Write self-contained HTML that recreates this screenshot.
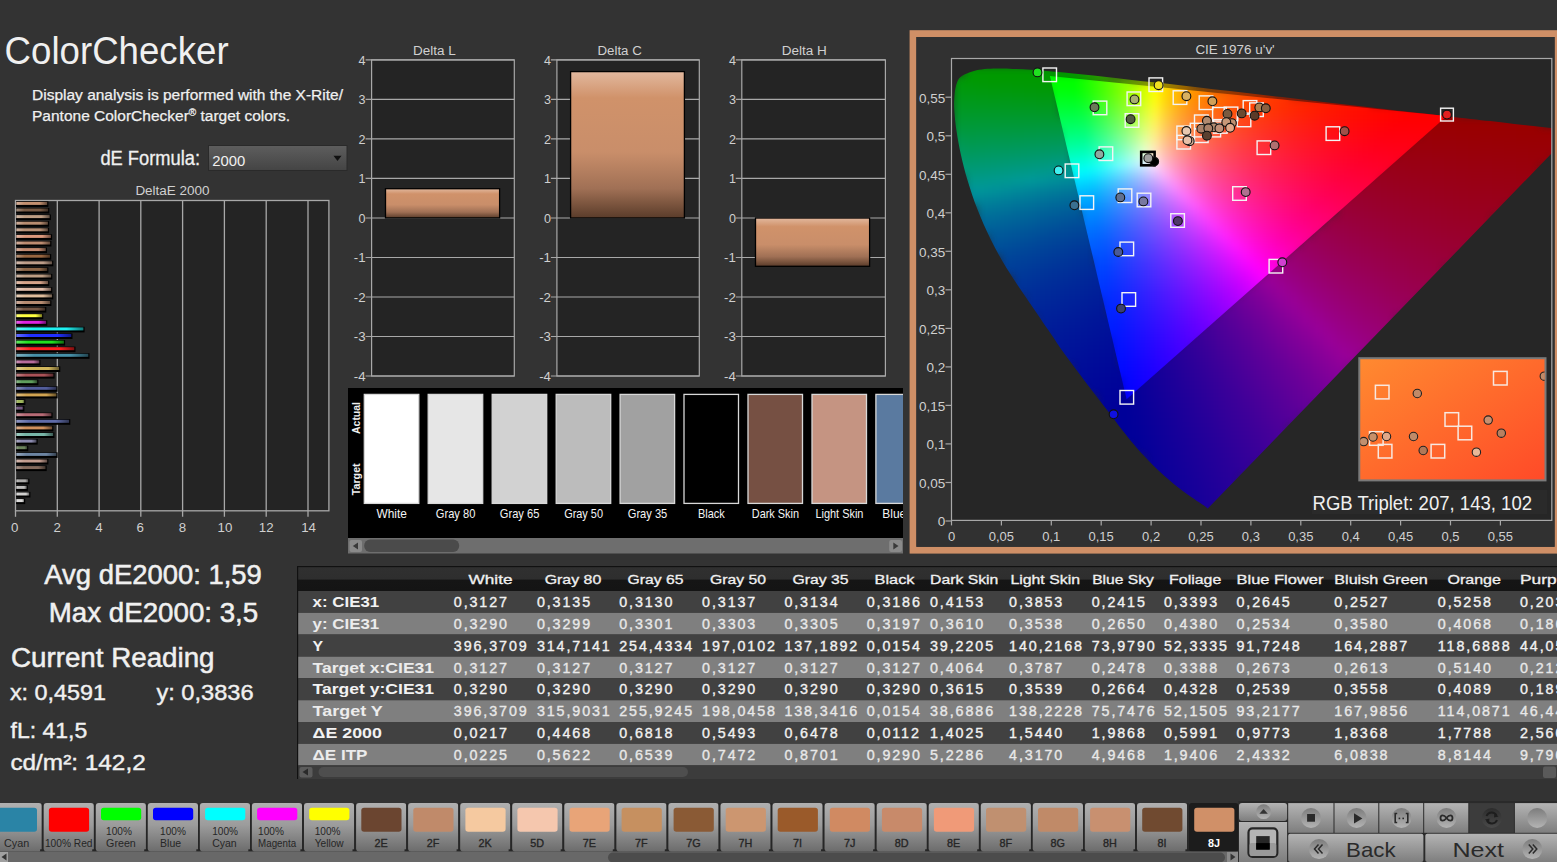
<!DOCTYPE html>
<html><head><meta charset="utf-8"><title>ColorChecker</title>
<style>
html,body{margin:0;padding:0;background:#333333;overflow:hidden;width:1557px;height:862px}
svg{display:block}
text{font-family:"Liberation Sans",sans-serif}
.cl1 rect{width:13px;height:11px}
.cl2 rect{width:11px;height:9px}
</style></head><body>
<svg width="1557" height="862" viewBox="0 0 1557 862">
<defs>
<linearGradient id="gDrop" x1="0" y1="0" x2="0" y2="1"><stop offset="0" stop-color="#5e5e5e"/><stop offset="1" stop-color="#444"/></linearGradient>
<linearGradient id="gBarV" x1="0" y1="0" x2="0" y2="1"><stop offset="0" stop-color="#e2b89e"/><stop offset="0.18" stop-color="#d0926a"/><stop offset="0.55" stop-color="#c98e6a"/><stop offset="0.8" stop-color="#a07055"/><stop offset="1" stop-color="#5a3c2a"/></linearGradient>
<linearGradient id="bg0"><stop offset="0" stop-color="#d5b19b"/><stop offset="0.25" stop-color="#c39070"/><stop offset="0.75" stop-color="#c39070"/><stop offset="1" stop-color="#624838"/></linearGradient><linearGradient id="bg1"><stop offset="0" stop-color="#a08c7c"/><stop offset="0.25" stop-color="#785a44"/><stop offset="0.75" stop-color="#785a44"/><stop offset="1" stop-color="#3c2d22"/></linearGradient><linearGradient id="bg2"><stop offset="0" stop-color="#d1baa8"/><stop offset="0.25" stop-color="#bd9d83"/><stop offset="0.75" stop-color="#bd9d83"/><stop offset="1" stop-color="#5e4e42"/></linearGradient><linearGradient id="bg3"><stop offset="0" stop-color="#cdae9b"/><stop offset="0.25" stop-color="#b78c70"/><stop offset="0.75" stop-color="#b78c70"/><stop offset="1" stop-color="#5c4638"/></linearGradient><linearGradient id="bg4"><stop offset="0" stop-color="#cdb19f"/><stop offset="0.25" stop-color="#b79076"/><stop offset="0.75" stop-color="#b79076"/><stop offset="1" stop-color="#5c483b"/></linearGradient><linearGradient id="bg5"><stop offset="0" stop-color="#e6b7a3"/><stop offset="0.25" stop-color="#dc987c"/><stop offset="0.75" stop-color="#dc987c"/><stop offset="1" stop-color="#6e4c3e"/></linearGradient><linearGradient id="bg6"><stop offset="0" stop-color="#d1ae9c"/><stop offset="0.25" stop-color="#bd8c71"/><stop offset="0.75" stop-color="#bd8c71"/><stop offset="1" stop-color="#5e4638"/></linearGradient><linearGradient id="bg7"><stop offset="0" stop-color="#d5ad9b"/><stop offset="0.25" stop-color="#c38a70"/><stop offset="0.75" stop-color="#c38a70"/><stop offset="1" stop-color="#624538"/></linearGradient><linearGradient id="bg8"><stop offset="0" stop-color="#b89479"/><stop offset="0.25" stop-color="#996640"/><stop offset="0.75" stop-color="#996640"/><stop offset="1" stop-color="#4c3320"/></linearGradient><linearGradient id="bg9"><stop offset="0" stop-color="#d1baac"/><stop offset="0.25" stop-color="#bd9d89"/><stop offset="0.75" stop-color="#bd9d89"/><stop offset="1" stop-color="#5e4e44"/></linearGradient><linearGradient id="bg10"><stop offset="0" stop-color="#af947f"/><stop offset="0.25" stop-color="#8d6648"/><stop offset="0.75" stop-color="#8d6648"/><stop offset="1" stop-color="#463324"/></linearGradient><linearGradient id="bg11"><stop offset="0" stop-color="#d1baa8"/><stop offset="0.25" stop-color="#bd9d83"/><stop offset="0.75" stop-color="#bd9d83"/><stop offset="1" stop-color="#5e4e42"/></linearGradient><linearGradient id="bg12"><stop offset="0" stop-color="#e2bfac"/><stop offset="0.25" stop-color="#d6a389"/><stop offset="0.75" stop-color="#d6a389"/><stop offset="1" stop-color="#6b5244"/></linearGradient><linearGradient id="bg13"><stop offset="0" stop-color="#e9cfc1"/><stop offset="0.25" stop-color="#e0baa6"/><stop offset="0.75" stop-color="#e0baa6"/><stop offset="1" stop-color="#705d53"/></linearGradient><linearGradient id="bg14"><stop offset="0" stop-color="#e9d1ba"/><stop offset="0.25" stop-color="#e0bd9c"/><stop offset="0.75" stop-color="#e0bd9c"/><stop offset="1" stop-color="#705e4e"/></linearGradient><linearGradient id="bg15"><stop offset="0" stop-color="#cdae9c"/><stop offset="0.25" stop-color="#b78c71"/><stop offset="0.75" stop-color="#b78c71"/><stop offset="1" stop-color="#5c4638"/></linearGradient><linearGradient id="bg16"><stop offset="0" stop-color="#9e897c"/><stop offset="0.25" stop-color="#745644"/><stop offset="0.75" stop-color="#745644"/><stop offset="1" stop-color="#3a2b22"/></linearGradient><linearGradient id="bg17"><stop offset="0" stop-color="#ffff79"/><stop offset="0.25" stop-color="#ffff40"/><stop offset="0.75" stop-color="#ffff40"/><stop offset="1" stop-color="#808020"/></linearGradient><linearGradient id="bg18"><stop offset="0" stop-color="#e963e9"/><stop offset="0.25" stop-color="#e020e0"/><stop offset="0.75" stop-color="#e020e0"/><stop offset="1" stop-color="#701070"/></linearGradient><linearGradient id="bg19"><stop offset="0" stop-color="#63f4f4"/><stop offset="0.25" stop-color="#20f0f0"/><stop offset="0.75" stop-color="#20f0f0"/><stop offset="1" stop-color="#107878"/></linearGradient><linearGradient id="bg20"><stop offset="0" stop-color="#636eff"/><stop offset="0.25" stop-color="#2030ff"/><stop offset="0.75" stop-color="#2030ff"/><stop offset="1" stop-color="#101880"/></linearGradient><linearGradient id="bg21"><stop offset="0" stop-color="#63e963"/><stop offset="0.25" stop-color="#20e020"/><stop offset="0.75" stop-color="#20e020"/><stop offset="1" stop-color="#107010"/></linearGradient><linearGradient id="bg22"><stop offset="0" stop-color="#ff6363"/><stop offset="0.25" stop-color="#ff2020"/><stop offset="0.75" stop-color="#ff2020"/><stop offset="1" stop-color="#801010"/></linearGradient><linearGradient id="bg23"><stop offset="0" stop-color="#7eb1c2"/><stop offset="0.25" stop-color="#4690a8"/><stop offset="0.75" stop-color="#4690a8"/><stop offset="1" stop-color="#234854"/></linearGradient><linearGradient id="bg24"><stop offset="0" stop-color="#cd97ba"/><stop offset="0.25" stop-color="#b76b9c"/><stop offset="0.75" stop-color="#b76b9c"/><stop offset="1" stop-color="#5c364e"/></linearGradient><linearGradient id="bg25"><stop offset="0" stop-color="#decc8e"/><stop offset="0.25" stop-color="#d0b65d"/><stop offset="0.75" stop-color="#d0b65d"/><stop offset="1" stop-color="#685b2e"/></linearGradient><linearGradient id="bg26"><stop offset="0" stop-color="#c48689"/><stop offset="0.25" stop-color="#aa5257"/><stop offset="0.75" stop-color="#aa5257"/><stop offset="1" stop-color="#55292c"/></linearGradient><linearGradient id="bg27"><stop offset="0" stop-color="#8fba8e"/><stop offset="0.25" stop-color="#5f9d5d"/><stop offset="0.75" stop-color="#5f9d5d"/><stop offset="1" stop-color="#304e2e"/></linearGradient><linearGradient id="bg28"><stop offset="0" stop-color="#878eba"/><stop offset="0.25" stop-color="#535e9c"/><stop offset="0.75" stop-color="#535e9c"/><stop offset="1" stop-color="#2a2f4e"/></linearGradient><linearGradient id="bg29"><stop offset="0" stop-color="#debf85"/><stop offset="0.25" stop-color="#d0a351"/><stop offset="0.75" stop-color="#d0a351"/><stop offset="1" stop-color="#685228"/></linearGradient><linearGradient id="bg30"><stop offset="0" stop-color="#bbcc8e"/><stop offset="0.25" stop-color="#9eb65d"/><stop offset="0.75" stop-color="#9eb65d"/><stop offset="1" stop-color="#4f5b2e"/></linearGradient><linearGradient id="bg31"><stop offset="0" stop-color="#9e8ca8"/><stop offset="0.25" stop-color="#745a83"/><stop offset="0.75" stop-color="#745a83"/><stop offset="1" stop-color="#3a2d42"/></linearGradient><linearGradient id="bg32"><stop offset="0" stop-color="#cd979f"/><stop offset="0.25" stop-color="#b76b76"/><stop offset="0.75" stop-color="#b76b76"/><stop offset="1" stop-color="#5c363b"/></linearGradient><linearGradient id="bg33"><stop offset="0" stop-color="#8f97c2"/><stop offset="0.25" stop-color="#5f6ba8"/><stop offset="0.75" stop-color="#5f6ba8"/><stop offset="1" stop-color="#303654"/></linearGradient><linearGradient id="bg34"><stop offset="0" stop-color="#deb18e"/><stop offset="0.25" stop-color="#d0905d"/><stop offset="0.75" stop-color="#d0905d"/><stop offset="1" stop-color="#68482e"/></linearGradient><linearGradient id="bg35"><stop offset="0" stop-color="#a0ccc2"/><stop offset="0.25" stop-color="#78b6a8"/><stop offset="0.75" stop-color="#78b6a8"/><stop offset="1" stop-color="#3c5b54"/></linearGradient><linearGradient id="bg36"><stop offset="0" stop-color="#aeadc6"/><stop offset="0.25" stop-color="#8b8aae"/><stop offset="0.75" stop-color="#8b8aae"/><stop offset="1" stop-color="#464557"/></linearGradient><linearGradient id="bg37"><stop offset="0" stop-color="#98a98e"/><stop offset="0.25" stop-color="#6c845d"/><stop offset="0.75" stop-color="#6c845d"/><stop offset="1" stop-color="#36422e"/></linearGradient><linearGradient id="bg38"><stop offset="0" stop-color="#98a9be"/><stop offset="0.25" stop-color="#6c84a2"/><stop offset="0.75" stop-color="#6c84a2"/><stop offset="1" stop-color="#364251"/></linearGradient><linearGradient id="bg39"><stop offset="0" stop-color="#d5bab1"/><stop offset="0.25" stop-color="#c39d8f"/><stop offset="0.75" stop-color="#c39d8f"/><stop offset="1" stop-color="#624e48"/></linearGradient><linearGradient id="bg40"><stop offset="0" stop-color="#aa978e"/><stop offset="0.25" stop-color="#856b5d"/><stop offset="0.75" stop-color="#856b5d"/><stop offset="1" stop-color="#42362e"/></linearGradient><linearGradient id="bg42"><stop offset="0" stop-color="#c4c3c2"/><stop offset="0.25" stop-color="#aaa9a8"/><stop offset="0.75" stop-color="#aaa9a8"/><stop offset="1" stop-color="#555454"/></linearGradient><linearGradient id="bg43"><stop offset="0" stop-color="#d1d0cf"/><stop offset="0.25" stop-color="#bdbcbb"/><stop offset="0.75" stop-color="#bdbcbb"/><stop offset="1" stop-color="#5e5e5e"/></linearGradient><linearGradient id="bg44"><stop offset="0" stop-color="#dedddd"/><stop offset="0.25" stop-color="#d0cfce"/><stop offset="0.75" stop-color="#d0cfce"/><stop offset="1" stop-color="#686867"/></linearGradient><linearGradient id="bg45"><stop offset="0" stop-color="#e6e6e5"/><stop offset="0.25" stop-color="#dcdbda"/><stop offset="0.75" stop-color="#dcdbda"/><stop offset="1" stop-color="#6e6e6d"/></linearGradient>
</defs>
<rect width="1557" height="862" fill="#333333"/>
<text x="4.6" y="63.9" font-size="39.0" fill="#f0f0f0" textLength="224.0" lengthAdjust="spacingAndGlyphs">ColorChecker</text><text x="32.0" y="100.1" font-size="15.5" fill="#f0f0f0" textLength="311.0" lengthAdjust="spacingAndGlyphs" stroke="#f0f0f0" stroke-width="0.25">Display analysis is performed with the X-Rite/</text><text x="32" y="120.9" font-size="15.5" fill="#f0f0f0" stroke="#f0f0f0" stroke-width="0.25">Pantone ColorChecker<tspan font-size="10" dy="-5">®</tspan><tspan dy="5"> target colors.</tspan></text><text x="100.4" y="165.3" font-size="20.5" fill="#f0f0f0" textLength="99.7" lengthAdjust="spacingAndGlyphs" stroke="#f0f0f0" stroke-width="0.3">dE Formula:</text><rect x="208.5" y="145.5" width="138.5" height="25" fill="url(#gDrop)" stroke="#2a2a2a" stroke-width="1"/><text x="212.2" y="166.2" font-size="15.5" fill="#f0f0f0" textLength="33.0" lengthAdjust="spacingAndGlyphs">2000</text><path d="M333.5,155.8 L341.5,155.8 L337.5,161 Z" fill="#111"/><text x="135.4" y="194.8" font-size="12.3" fill="#d0d0d0" textLength="74.2" lengthAdjust="spacingAndGlyphs">DeltaE 2000</text><rect x="15.5" y="200.5" width="313.4" height="310.3" fill="#242424"/><line x1="57.3" y1="200.5" x2="57.3" y2="516.8" stroke="#a8a8a8" stroke-width="1.3"/><line x1="99.1" y1="200.5" x2="99.1" y2="516.8" stroke="#a8a8a8" stroke-width="1.3"/><line x1="140.8" y1="200.5" x2="140.8" y2="516.8" stroke="#a8a8a8" stroke-width="1.3"/><line x1="182.6" y1="200.5" x2="182.6" y2="516.8" stroke="#a8a8a8" stroke-width="1.3"/><line x1="224.4" y1="200.5" x2="224.4" y2="516.8" stroke="#a8a8a8" stroke-width="1.3"/><line x1="266.2" y1="200.5" x2="266.2" y2="516.8" stroke="#a8a8a8" stroke-width="1.3"/><line x1="308.0" y1="200.5" x2="308.0" y2="516.8" stroke="#a8a8a8" stroke-width="1.3"/><rect x="15.5" y="200.5" width="313.4" height="310.3" fill="none" stroke="#a8a8a8" stroke-width="1.3"/><line x1="15.5" y1="510.8" x2="15.5" y2="516.8" stroke="#a8a8a8" stroke-width="1.3"/><text x="14.7" y="532.2" font-size="13.0" fill="#d0d0d0" textLength="7.4" lengthAdjust="spacingAndGlyphs" text-anchor="middle">0</text><text x="57.1" y="532.2" font-size="13.0" fill="#d0d0d0" textLength="7.4" lengthAdjust="spacingAndGlyphs" text-anchor="middle">2</text><text x="99.0" y="532.2" font-size="13.0" fill="#d0d0d0" textLength="7.4" lengthAdjust="spacingAndGlyphs" text-anchor="middle">4</text><text x="140.3" y="532.2" font-size="13.0" fill="#d0d0d0" textLength="7.4" lengthAdjust="spacingAndGlyphs" text-anchor="middle">6</text><text x="182.5" y="532.2" font-size="13.0" fill="#d0d0d0" textLength="7.4" lengthAdjust="spacingAndGlyphs" text-anchor="middle">8</text><text x="225.0" y="532.2" font-size="13.0" fill="#d0d0d0" textLength="14.8" lengthAdjust="spacingAndGlyphs" text-anchor="middle">10</text><text x="266.2" y="532.2" font-size="13.0" fill="#d0d0d0" textLength="14.8" lengthAdjust="spacingAndGlyphs" text-anchor="middle">12</text><text x="308.6" y="532.2" font-size="13.0" fill="#d0d0d0" textLength="14.8" lengthAdjust="spacingAndGlyphs" text-anchor="middle">14</text><rect x="16.1" y="201.3" width="32.3" height="5.6" fill="#000"/><rect x="16.3" y="201.9" width="30.9" height="3.0" fill="url(#bg0)"/><rect x="16.1" y="207.9" width="33.2" height="5.6" fill="#000"/><rect x="16.3" y="208.5" width="31.8" height="3.0" fill="url(#bg1)"/><rect x="16.1" y="214.5" width="34.8" height="5.6" fill="#000"/><rect x="16.3" y="215.1" width="33.4" height="3.0" fill="url(#bg2)"/><rect x="16.1" y="221.1" width="33.0" height="5.6" fill="#000"/><rect x="16.3" y="221.7" width="31.6" height="3.0" fill="url(#bg3)"/><rect x="16.1" y="227.7" width="33.0" height="5.6" fill="#000"/><rect x="16.3" y="228.3" width="31.6" height="3.0" fill="url(#bg4)"/><rect x="16.1" y="234.3" width="36.0" height="5.6" fill="#000"/><rect x="16.3" y="234.9" width="34.6" height="3.0" fill="url(#bg5)"/><rect x="16.1" y="240.9" width="35.3" height="5.6" fill="#000"/><rect x="16.3" y="241.5" width="33.9" height="3.0" fill="url(#bg6)"/><rect x="16.1" y="247.5" width="30.9" height="5.6" fill="#000"/><rect x="16.3" y="248.1" width="29.5" height="3.0" fill="url(#bg7)"/><rect x="16.1" y="254.1" width="35.1" height="5.6" fill="#000"/><rect x="16.3" y="254.7" width="33.7" height="3.0" fill="url(#bg8)"/><rect x="16.1" y="260.7" width="37.2" height="5.6" fill="#000"/><rect x="16.3" y="261.3" width="35.8" height="3.0" fill="url(#bg9)"/><rect x="16.1" y="267.3" width="32.3" height="5.6" fill="#000"/><rect x="16.3" y="267.9" width="30.9" height="3.0" fill="url(#bg10)"/><rect x="16.1" y="273.9" width="36.2" height="5.6" fill="#000"/><rect x="16.3" y="274.5" width="34.8" height="3.0" fill="url(#bg11)"/><rect x="16.1" y="280.5" width="33.2" height="5.6" fill="#000"/><rect x="16.3" y="281.1" width="31.8" height="3.0" fill="url(#bg12)"/><rect x="16.1" y="287.2" width="36.2" height="5.6" fill="#000"/><rect x="16.3" y="287.8" width="34.8" height="3.0" fill="url(#bg13)"/><rect x="16.1" y="293.8" width="37.2" height="5.6" fill="#000"/><rect x="16.3" y="294.4" width="35.8" height="3.0" fill="url(#bg14)"/><rect x="16.1" y="300.4" width="35.3" height="5.6" fill="#000"/><rect x="16.3" y="301.0" width="33.9" height="3.0" fill="url(#bg15)"/><rect x="16.1" y="307.0" width="30.2" height="5.6" fill="#000"/><rect x="16.3" y="307.6" width="28.8" height="3.0" fill="url(#bg16)"/><rect x="16.1" y="313.6" width="27.2" height="5.6" fill="#000"/><rect x="16.3" y="314.2" width="25.8" height="3.0" fill="url(#bg17)"/><rect x="16.1" y="320.2" width="31.2" height="5.6" fill="#000"/><rect x="16.3" y="320.8" width="29.8" height="3.0" fill="url(#bg18)"/><rect x="16.1" y="326.8" width="68.5" height="5.6" fill="#000"/><rect x="16.3" y="327.4" width="67.1" height="3.0" fill="url(#bg19)"/><rect x="16.1" y="333.4" width="56.4" height="5.6" fill="#000"/><rect x="16.3" y="334.0" width="55.0" height="3.0" fill="url(#bg20)"/><rect x="16.1" y="340.0" width="49.0" height="5.6" fill="#000"/><rect x="16.3" y="340.6" width="47.6" height="3.0" fill="url(#bg21)"/><rect x="16.1" y="346.6" width="59.4" height="5.6" fill="#000"/><rect x="16.3" y="347.2" width="58.0" height="3.0" fill="url(#bg22)"/><rect x="16.1" y="353.2" width="73.4" height="5.6" fill="#000"/><rect x="16.3" y="353.8" width="72.0" height="3.0" fill="url(#bg23)"/><rect x="16.1" y="359.8" width="24.4" height="5.6" fill="#000"/><rect x="16.3" y="360.4" width="23.0" height="3.0" fill="url(#bg24)"/><rect x="16.1" y="366.4" width="44.2" height="5.6" fill="#000"/><rect x="16.3" y="367.0" width="42.8" height="3.0" fill="url(#bg25)"/><rect x="16.1" y="373.0" width="38.5" height="5.6" fill="#000"/><rect x="16.3" y="373.6" width="37.1" height="3.0" fill="url(#bg26)"/><rect x="16.1" y="379.6" width="22.3" height="5.6" fill="#000"/><rect x="16.3" y="380.2" width="20.9" height="3.0" fill="url(#bg27)"/><rect x="16.1" y="386.2" width="41.5" height="5.6" fill="#000"/><rect x="16.3" y="386.8" width="40.1" height="3.0" fill="url(#bg28)"/><rect x="16.1" y="392.8" width="41.5" height="5.6" fill="#000"/><rect x="16.3" y="393.4" width="40.1" height="3.0" fill="url(#bg29)"/><rect x="16.1" y="399.4" width="9.3" height="5.6" fill="#000"/><rect x="16.3" y="400.0" width="7.9" height="3.0" fill="url(#bg30)"/><rect x="16.1" y="406.0" width="8.3" height="5.6" fill="#000"/><rect x="16.3" y="406.6" width="6.9" height="3.0" fill="url(#bg31)"/><rect x="16.1" y="412.6" width="36.5" height="5.6" fill="#000"/><rect x="16.3" y="413.2" width="35.1" height="3.0" fill="url(#bg32)"/><rect x="16.1" y="419.2" width="54.2" height="5.6" fill="#000"/><rect x="16.3" y="419.8" width="52.8" height="3.0" fill="url(#bg33)"/><rect x="16.1" y="425.8" width="37.3" height="5.6" fill="#000"/><rect x="16.3" y="426.4" width="35.9" height="3.0" fill="url(#bg34)"/><rect x="16.1" y="432.4" width="38.3" height="5.6" fill="#000"/><rect x="16.3" y="433.0" width="36.9" height="3.0" fill="url(#bg35)"/><rect x="16.1" y="439.0" width="21.6" height="5.6" fill="#000"/><rect x="16.3" y="439.6" width="20.2" height="3.0" fill="url(#bg36)"/><rect x="16.1" y="445.6" width="12.2" height="5.6" fill="#000"/><rect x="16.3" y="446.2" width="10.8" height="3.0" fill="url(#bg37)"/><rect x="16.1" y="452.3" width="41.5" height="5.6" fill="#000"/><rect x="16.3" y="452.9" width="40.1" height="3.0" fill="url(#bg38)"/><rect x="16.1" y="458.9" width="32.3" height="5.6" fill="#000"/><rect x="16.3" y="459.5" width="30.9" height="3.0" fill="url(#bg39)"/><rect x="16.1" y="465.5" width="30.6" height="5.6" fill="#000"/><rect x="16.3" y="466.1" width="29.2" height="3.0" fill="url(#bg40)"/><rect x="16.1" y="478.7" width="13.3" height="5.6" fill="#000"/><rect x="16.3" y="479.3" width="11.9" height="3.0" fill="url(#bg42)"/><rect x="16.1" y="485.3" width="11.8" height="5.6" fill="#000"/><rect x="16.3" y="485.9" width="10.4" height="3.0" fill="url(#bg43)"/><rect x="16.1" y="491.9" width="14.3" height="5.6" fill="#000"/><rect x="16.3" y="492.5" width="12.9" height="3.0" fill="url(#bg44)"/><rect x="16.1" y="498.5" width="9.1" height="5.6" fill="#000"/><rect x="16.3" y="499.1" width="7.7" height="3.0" fill="url(#bg45)"/><text x="413.1" y="55.0" font-size="12.3" fill="#d0d0d0" textLength="42.7" lengthAdjust="spacingAndGlyphs">Delta L</text><rect x="371.6" y="59.9" width="142.7" height="316.1" fill="#242424" stroke="#a8a8a8" stroke-width="1.2"/><line x1="365.6" y1="59.9" x2="514.3" y2="59.9" stroke="#a8a8a8" stroke-width="1.2"/><text x="365.6" y="64.8" font-size="12.4" fill="#d0d0d0" textLength="7.0" lengthAdjust="spacingAndGlyphs" text-anchor="end">4</text><line x1="365.6" y1="99.4" x2="514.3" y2="99.4" stroke="#a8a8a8" stroke-width="1.2"/><text x="365.6" y="104.3" font-size="12.4" fill="#d0d0d0" textLength="7.0" lengthAdjust="spacingAndGlyphs" text-anchor="end">3</text><line x1="365.6" y1="138.9" x2="514.3" y2="138.9" stroke="#a8a8a8" stroke-width="1.2"/><text x="365.6" y="143.8" font-size="12.4" fill="#d0d0d0" textLength="7.0" lengthAdjust="spacingAndGlyphs" text-anchor="end">2</text><line x1="365.6" y1="178.4" x2="514.3" y2="178.4" stroke="#a8a8a8" stroke-width="1.2"/><text x="365.6" y="183.3" font-size="12.4" fill="#d0d0d0" textLength="7.0" lengthAdjust="spacingAndGlyphs" text-anchor="end">1</text><line x1="365.6" y1="218.0" x2="514.3" y2="218.0" stroke="#a8a8a8" stroke-width="1.2"/><text x="365.6" y="222.9" font-size="12.4" fill="#d0d0d0" textLength="7.0" lengthAdjust="spacingAndGlyphs" text-anchor="end">0</text><line x1="365.6" y1="257.5" x2="514.3" y2="257.5" stroke="#a8a8a8" stroke-width="1.2"/><text x="365.6" y="262.4" font-size="12.4" fill="#d0d0d0" textLength="11.8" lengthAdjust="spacingAndGlyphs" text-anchor="end">-1</text><line x1="365.6" y1="297.0" x2="514.3" y2="297.0" stroke="#a8a8a8" stroke-width="1.2"/><text x="365.6" y="301.9" font-size="12.4" fill="#d0d0d0" textLength="11.8" lengthAdjust="spacingAndGlyphs" text-anchor="end">-2</text><line x1="365.6" y1="336.5" x2="514.3" y2="336.5" stroke="#a8a8a8" stroke-width="1.2"/><text x="365.6" y="341.4" font-size="12.4" fill="#d0d0d0" textLength="11.8" lengthAdjust="spacingAndGlyphs" text-anchor="end">-3</text><line x1="365.6" y1="376.0" x2="514.3" y2="376.0" stroke="#a8a8a8" stroke-width="1.2"/><text x="365.6" y="380.9" font-size="12.4" fill="#d0d0d0" textLength="11.8" lengthAdjust="spacingAndGlyphs" text-anchor="end">-4</text><rect x="385.5" y="188.7" width="114.1" height="29.2" fill="url(#gBarV)" stroke="#000" stroke-width="1.3"/><text x="597.5" y="55.0" font-size="12.3" fill="#d0d0d0" textLength="44.3" lengthAdjust="spacingAndGlyphs">Delta C</text><rect x="556.9" y="59.9" width="142.4" height="316.1" fill="#242424" stroke="#a8a8a8" stroke-width="1.2"/><line x1="550.9" y1="59.9" x2="699.3" y2="59.9" stroke="#a8a8a8" stroke-width="1.2"/><text x="551.0" y="64.8" font-size="12.4" fill="#d0d0d0" textLength="7.0" lengthAdjust="spacingAndGlyphs" text-anchor="end">4</text><line x1="550.9" y1="99.4" x2="699.3" y2="99.4" stroke="#a8a8a8" stroke-width="1.2"/><text x="551.0" y="104.3" font-size="12.4" fill="#d0d0d0" textLength="7.0" lengthAdjust="spacingAndGlyphs" text-anchor="end">3</text><line x1="550.9" y1="138.9" x2="699.3" y2="138.9" stroke="#a8a8a8" stroke-width="1.2"/><text x="551.0" y="143.8" font-size="12.4" fill="#d0d0d0" textLength="7.0" lengthAdjust="spacingAndGlyphs" text-anchor="end">2</text><line x1="550.9" y1="178.4" x2="699.3" y2="178.4" stroke="#a8a8a8" stroke-width="1.2"/><text x="551.0" y="183.3" font-size="12.4" fill="#d0d0d0" textLength="7.0" lengthAdjust="spacingAndGlyphs" text-anchor="end">1</text><line x1="550.9" y1="218.0" x2="699.3" y2="218.0" stroke="#a8a8a8" stroke-width="1.2"/><text x="551.0" y="222.9" font-size="12.4" fill="#d0d0d0" textLength="7.0" lengthAdjust="spacingAndGlyphs" text-anchor="end">0</text><line x1="550.9" y1="257.5" x2="699.3" y2="257.5" stroke="#a8a8a8" stroke-width="1.2"/><text x="551.0" y="262.4" font-size="12.4" fill="#d0d0d0" textLength="11.8" lengthAdjust="spacingAndGlyphs" text-anchor="end">-1</text><line x1="550.9" y1="297.0" x2="699.3" y2="297.0" stroke="#a8a8a8" stroke-width="1.2"/><text x="551.0" y="301.9" font-size="12.4" fill="#d0d0d0" textLength="11.8" lengthAdjust="spacingAndGlyphs" text-anchor="end">-2</text><line x1="550.9" y1="336.5" x2="699.3" y2="336.5" stroke="#a8a8a8" stroke-width="1.2"/><text x="551.0" y="341.4" font-size="12.4" fill="#d0d0d0" textLength="11.8" lengthAdjust="spacingAndGlyphs" text-anchor="end">-3</text><line x1="550.9" y1="376.0" x2="699.3" y2="376.0" stroke="#a8a8a8" stroke-width="1.2"/><text x="551.0" y="380.9" font-size="12.4" fill="#d0d0d0" textLength="11.8" lengthAdjust="spacingAndGlyphs" text-anchor="end">-4</text><rect x="570.6" y="71.6" width="113.8" height="146.4" fill="url(#gBarV)" stroke="#000" stroke-width="1.3"/><text x="781.7" y="55.0" font-size="12.3" fill="#d0d0d0" textLength="45.1" lengthAdjust="spacingAndGlyphs">Delta H</text><rect x="741.8" y="59.9" width="143.6" height="316.1" fill="#242424" stroke="#a8a8a8" stroke-width="1.2"/><line x1="735.8" y1="59.9" x2="885.4" y2="59.9" stroke="#a8a8a8" stroke-width="1.2"/><text x="735.9" y="64.8" font-size="12.4" fill="#d0d0d0" textLength="7.0" lengthAdjust="spacingAndGlyphs" text-anchor="end">4</text><line x1="735.8" y1="99.4" x2="885.4" y2="99.4" stroke="#a8a8a8" stroke-width="1.2"/><text x="735.9" y="104.3" font-size="12.4" fill="#d0d0d0" textLength="7.0" lengthAdjust="spacingAndGlyphs" text-anchor="end">3</text><line x1="735.8" y1="138.9" x2="885.4" y2="138.9" stroke="#a8a8a8" stroke-width="1.2"/><text x="735.9" y="143.8" font-size="12.4" fill="#d0d0d0" textLength="7.0" lengthAdjust="spacingAndGlyphs" text-anchor="end">2</text><line x1="735.8" y1="178.4" x2="885.4" y2="178.4" stroke="#a8a8a8" stroke-width="1.2"/><text x="735.9" y="183.3" font-size="12.4" fill="#d0d0d0" textLength="7.0" lengthAdjust="spacingAndGlyphs" text-anchor="end">1</text><line x1="735.8" y1="218.0" x2="885.4" y2="218.0" stroke="#a8a8a8" stroke-width="1.2"/><text x="735.9" y="222.9" font-size="12.4" fill="#d0d0d0" textLength="7.0" lengthAdjust="spacingAndGlyphs" text-anchor="end">0</text><line x1="735.8" y1="257.5" x2="885.4" y2="257.5" stroke="#a8a8a8" stroke-width="1.2"/><text x="735.9" y="262.4" font-size="12.4" fill="#d0d0d0" textLength="11.8" lengthAdjust="spacingAndGlyphs" text-anchor="end">-1</text><line x1="735.8" y1="297.0" x2="885.4" y2="297.0" stroke="#a8a8a8" stroke-width="1.2"/><text x="735.9" y="301.9" font-size="12.4" fill="#d0d0d0" textLength="11.8" lengthAdjust="spacingAndGlyphs" text-anchor="end">-2</text><line x1="735.8" y1="336.5" x2="885.4" y2="336.5" stroke="#a8a8a8" stroke-width="1.2"/><text x="735.9" y="341.4" font-size="12.4" fill="#d0d0d0" textLength="11.8" lengthAdjust="spacingAndGlyphs" text-anchor="end">-3</text><line x1="735.8" y1="376.0" x2="885.4" y2="376.0" stroke="#a8a8a8" stroke-width="1.2"/><text x="735.9" y="380.9" font-size="12.4" fill="#d0d0d0" textLength="11.8" lengthAdjust="spacingAndGlyphs" text-anchor="end">-4</text><rect x="755.5" y="218.0" width="114.1" height="48.3" fill="url(#gBarV)" stroke="#000" stroke-width="1.3"/><rect x="348" y="388" width="555" height="150" fill="#000"/><text x="0" y="0" font-size="11.5" font-weight="bold" fill="#f0f0f0" transform="translate(360.4,434) rotate(-90)" textLength="32" lengthAdjust="spacingAndGlyphs">Actual</text><text x="0" y="0" font-size="11.5" font-weight="bold" fill="#f0f0f0" transform="translate(360.4,495.3) rotate(-90)" textLength="32" lengthAdjust="spacingAndGlyphs">Target</text><svg x="348" y="388" width="555" height="150" overflow="hidden"><g transform="translate(-348,-388)"><rect x="364.3" y="394.4" width="54.5" height="109" fill="#ffffff" stroke="#d8d8d8" stroke-width="1.3"/><text x="391.7" y="518.4" font-size="13.0" fill="#f4f4f4" textLength="30.4" lengthAdjust="spacingAndGlyphs" text-anchor="middle">White</text><rect x="428.2" y="394.4" width="54.5" height="109" fill="#e6e6e6" stroke="#d8d8d8" stroke-width="1.3"/><text x="455.6" y="518.4" font-size="13.0" fill="#f4f4f4" textLength="39.5" lengthAdjust="spacingAndGlyphs" text-anchor="middle">Gray 80</text><rect x="492.2" y="394.4" width="54.5" height="109" fill="#d2d2d2" stroke="#d8d8d8" stroke-width="1.3"/><text x="519.6" y="518.4" font-size="13.0" fill="#f4f4f4" textLength="39.5" lengthAdjust="spacingAndGlyphs" text-anchor="middle">Gray 65</text><rect x="556.2" y="394.4" width="54.5" height="109" fill="#bcbcbc" stroke="#d8d8d8" stroke-width="1.3"/><text x="583.6" y="518.4" font-size="13.0" fill="#f4f4f4" textLength="38.9" lengthAdjust="spacingAndGlyphs" text-anchor="middle">Gray 50</text><rect x="620.1" y="394.4" width="54.5" height="109" fill="#a1a1a1" stroke="#d8d8d8" stroke-width="1.3"/><text x="647.5" y="518.4" font-size="13.0" fill="#f4f4f4" textLength="39.5" lengthAdjust="spacingAndGlyphs" text-anchor="middle">Gray 35</text><rect x="684.0" y="394.4" width="54.5" height="109" fill="#000000" stroke="#d8d8d8" stroke-width="1.3"/><text x="711.4" y="518.4" font-size="13.0" fill="#f4f4f4" textLength="26.7" lengthAdjust="spacingAndGlyphs" text-anchor="middle">Black</text><rect x="748.0" y="394.4" width="54.5" height="109" fill="#765043" stroke="#d8d8d8" stroke-width="1.3"/><text x="775.4" y="518.4" font-size="13.0" fill="#f4f4f4" textLength="47.2" lengthAdjust="spacingAndGlyphs" text-anchor="middle">Dark Skin</text><rect x="812.0" y="394.4" width="54.5" height="109" fill="#c59482" stroke="#d8d8d8" stroke-width="1.3"/><text x="839.4" y="518.4" font-size="13.0" fill="#f4f4f4" textLength="48.0" lengthAdjust="spacingAndGlyphs" text-anchor="middle">Light Skin</text><rect x="875.9" y="394.4" width="54.5" height="109" fill="#5a7aa0" stroke="#d8d8d8" stroke-width="1.3"/><text x="905.8" y="518.4" font-size="13.0" fill="#f4f4f4" textLength="47.0" lengthAdjust="spacingAndGlyphs" text-anchor="middle">Blue Sky</text></g></svg><rect x="348" y="538" width="555" height="15.5" fill="#6e6e6e"/><rect x="364.2" y="539.5" width="95" height="12.5" rx="6" fill="#4b4b4b"/><rect x="349.5" y="540" width="12.5" height="12" rx="2" fill="#8a8a8a"/><path d="M352.8,546 L358,542.5 L358,549.5 Z" fill="#3a3a3a"/><rect x="889.2" y="540" width="12.8" height="12" rx="2" fill="#8a8a8a"/><path d="M898.5,546 L893.3,542.5 L893.3,549.5 Z" fill="#3a3a3a"/><rect x="913" y="33.6" width="645" height="516.6" fill="none" stroke="#cf8f66" stroke-width="6.8"/><rect x="916.4" y="37" width="638.2" height="509.8" fill="#313131"/><text x="1195.4" y="53.9" font-size="12.3" fill="#d0d0d0" textLength="79.3" lengthAdjust="spacingAndGlyphs">CIE 1976 u'v'</text><rect x="951.5" y="58.5" width="600.3" height="461.9" fill="#262626"/><defs><clipPath id="cpLoc"><path d="M1207.8,508.6 C1207.4,508.2 1207.8,508.2 1205.2,506.4 C1202.6,504.6 1197.1,501.3 1192.0,497.6 C1186.9,493.9 1181.0,489.9 1174.4,484.4 C1167.8,478.9 1159.7,471.9 1152.3,464.5 C1144.9,457.1 1137.6,449.1 1130.3,440.3 C1123.0,431.5 1115.5,421.2 1108.2,411.6 C1100.9,402.0 1093.4,392.4 1086.2,382.9 C1079.0,373.3 1071.1,363.1 1064.8,354.3 C1058.5,345.5 1054.8,339.5 1048.3,330.0 C1041.8,320.5 1033.0,307.7 1026.0,297.4 C1019.0,287.1 1012.4,277.9 1006.5,268.1 C1000.6,258.4 995.3,248.7 990.5,238.9 C985.7,229.2 981.3,219.4 977.5,209.6 C973.7,199.8 970.3,189.5 967.5,180.3 C964.7,171.1 962.6,162.4 960.8,154.3 C959.0,146.2 957.7,138.6 956.6,131.5 C955.5,124.5 954.8,117.4 954.4,112.0 C954.0,106.6 953.9,103.3 954.2,99.0 C954.5,94.7 954.8,89.8 956.0,86.0 C957.2,82.2 957.7,79.0 961.5,76.3 C965.3,73.6 972.3,71.0 979.0,69.7 C985.7,68.4 995.4,68.5 1001.5,68.4 C1007.6,68.3 1010.9,68.9 1015.7,69.1 C1020.6,69.3 1025.4,69.5 1030.6,69.8 C1035.7,70.1 1041.0,70.5 1046.6,70.9 C1052.1,71.4 1057.9,71.9 1064.0,72.5 C1070.1,73.1 1076.4,73.8 1083.1,74.5 C1089.8,75.2 1096.9,75.9 1104.3,76.7 C1111.7,77.6 1119.5,78.4 1127.7,79.4 C1136.0,80.3 1144.6,81.3 1153.7,82.3 C1162.8,83.3 1172.3,84.4 1182.2,85.6 C1192.1,86.7 1202.5,87.9 1213.3,89.2 C1224.1,90.4 1235.4,91.7 1246.9,93.1 C1258.4,94.4 1270.4,95.8 1282.4,97.1 C1294.4,98.5 1306.9,100.0 1318.8,101.4 C1330.8,102.7 1342.5,104.1 1354.2,105.4 C1365.8,106.8 1377.6,108.2 1388.6,109.4 C1399.5,110.7 1409.9,111.8 1419.7,113.0 C1429.5,114.1 1438.8,115.2 1447.3,116.2 C1455.8,117.1 1463.5,118.1 1470.7,118.9 C1477.9,119.7 1484.3,120.4 1490.3,121.1 C1496.4,121.8 1501.7,122.4 1506.9,123.0 C1512.0,123.6 1516.8,124.2 1521.2,124.7 C1525.7,125.2 1528.4,125.5 1533.4,126.1 C1538.3,126.7 1546.2,127.6 1550.8,128.1 C1555.4,128.6 1557.9,128.9 1561.2,129.3 C1564.4,129.7 1568.1,130.1 1570.2,130.3 C1572.2,130.6 1573.1,130.7 1573.6,130.7 Z"/></clipPath><clipPath id="cpTri"><path d="M1446.9,116.1 L1049.9,75.9 L1126.6,399.3 Z"/></clipPath><clipPath id="cpPlot"><rect x="951.5" y="58.5" width="600.3" height="461.9"/></clipPath><filter id="blr" x="-5%" y="-5%" width="110%" height="110%"><feGaussianBlur stdDeviation="4"/></filter></defs><g clip-path="url(#cpPlot)"><g clip-path="url(#cpLoc)"><g style="filter:blur(4px)" class="cl1"><rect x="964" y="65" fill="#009900"/><rect x="976" y="65" fill="#009900"/><rect x="988" y="65" fill="#009900"/><rect x="1000" y="65" fill="#009900"/><rect x="1012" y="65" fill="#009900"/><rect x="1024" y="65" fill="#009900"/><rect x="1036" y="65" fill="#009900"/><rect x="1048" y="65" fill="#009900"/><rect x="1060" y="65" fill="#009900"/><rect x="1072" y="65" fill="#099900"/><rect x="1084" y="65" fill="#1c9900"/><rect x="1096" y="65" fill="#2f9900"/><rect x="952" y="75" fill="#009908"/><rect x="964" y="75" fill="#009903"/><rect x="976" y="75" fill="#009901"/><rect x="988" y="75" fill="#009900"/><rect x="1000" y="75" fill="#009900"/><rect x="1012" y="75" fill="#009900"/><rect x="1024" y="75" fill="#009900"/><rect x="1036" y="75" fill="#009900"/><rect x="1048" y="75" fill="#009900"/><rect x="1060" y="75" fill="#009900"/><rect x="1072" y="75" fill="#049900"/><rect x="1084" y="75" fill="#179900"/><rect x="1096" y="75" fill="#2a9900"/><rect x="1108" y="75" fill="#409900"/><rect x="1120" y="75" fill="#569900"/><rect x="1132" y="75" fill="#709900"/><rect x="1144" y="75" fill="#8b9900"/><rect x="1156" y="75" fill="#998c00"/><rect x="1168" y="75" fill="#997600"/><rect x="1180" y="75" fill="#996500"/><rect x="952" y="85" fill="#00990e"/><rect x="964" y="85" fill="#00990d"/><rect x="976" y="85" fill="#00990c"/><rect x="988" y="85" fill="#00990b"/><rect x="1000" y="85" fill="#00990a"/><rect x="1012" y="85" fill="#009909"/><rect x="1024" y="85" fill="#009908"/><rect x="1036" y="85" fill="#009907"/><rect x="1048" y="85" fill="#009906"/><rect x="1120" y="85" fill="#569900"/><rect x="1132" y="85" fill="#709900"/><rect x="1144" y="85" fill="#8c9900"/><rect x="1156" y="85" fill="#998a00"/><rect x="1168" y="85" fill="#997400"/><rect x="1180" y="85" fill="#996200"/><rect x="1192" y="85" fill="#995400"/><rect x="1204" y="85" fill="#994800"/><rect x="1216" y="85" fill="#993f00"/><rect x="1228" y="85" fill="#993700"/><rect x="1240" y="85" fill="#993000"/><rect x="1252" y="85" fill="#992a00"/><rect x="1264" y="85" fill="#992500"/><rect x="952" y="95" fill="#009919"/><rect x="964" y="95" fill="#009919"/><rect x="976" y="95" fill="#009918"/><rect x="988" y="95" fill="#009917"/><rect x="1000" y="95" fill="#009917"/><rect x="1012" y="95" fill="#009916"/><rect x="1024" y="95" fill="#009915"/><rect x="1036" y="95" fill="#009914"/><rect x="1048" y="95" fill="#009914"/><rect x="1216" y="95" fill="#993d00"/><rect x="1228" y="95" fill="#993400"/><rect x="1240" y="95" fill="#992e00"/><rect x="1252" y="95" fill="#992800"/><rect x="1264" y="95" fill="#992200"/><rect x="1276" y="95" fill="#991e00"/><rect x="1288" y="95" fill="#991a00"/><rect x="1300" y="95" fill="#991600"/><rect x="1312" y="95" fill="#991300"/><rect x="1324" y="95" fill="#991000"/><rect x="1336" y="95" fill="#990d00"/><rect x="1348" y="95" fill="#990c00"/><rect x="1360" y="95" fill="#990900"/><rect x="952" y="105" fill="#009925"/><rect x="964" y="105" fill="#009924"/><rect x="976" y="105" fill="#009924"/><rect x="988" y="105" fill="#009924"/><rect x="1000" y="105" fill="#009923"/><rect x="1012" y="105" fill="#009923"/><rect x="1024" y="105" fill="#009923"/><rect x="1036" y="105" fill="#009922"/><rect x="1048" y="105" fill="#009922"/><rect x="1312" y="105" fill="#991100"/><rect x="1324" y="105" fill="#990e00"/><rect x="1336" y="105" fill="#990b00"/><rect x="1348" y="105" fill="#990900"/><rect x="1360" y="105" fill="#990700"/><rect x="1372" y="105" fill="#990500"/><rect x="1384" y="105" fill="#990300"/><rect x="1396" y="105" fill="#990200"/><rect x="1408" y="105" fill="#990000"/><rect x="1420" y="105" fill="#990000"/><rect x="1432" y="105" fill="#990000"/><rect x="1444" y="105" fill="#990000"/><rect x="952" y="115" fill="#009930"/><rect x="964" y="115" fill="#009931"/><rect x="976" y="115" fill="#009931"/><rect x="988" y="115" fill="#009931"/><rect x="1000" y="115" fill="#009931"/><rect x="1012" y="115" fill="#009931"/><rect x="1024" y="115" fill="#009931"/><rect x="1036" y="115" fill="#009931"/><rect x="1048" y="115" fill="#009931"/><rect x="1060" y="115" fill="#009931"/><rect x="1420" y="115" fill="#990000"/><rect x="1432" y="115" fill="#990000"/><rect x="1444" y="115" fill="#990000"/><rect x="1456" y="115" fill="#990000"/><rect x="1468" y="115" fill="#990000"/><rect x="1480" y="115" fill="#990000"/><rect x="1492" y="115" fill="#990000"/><rect x="1504" y="115" fill="#990000"/><rect x="1516" y="115" fill="#990000"/><rect x="1528" y="115" fill="#990000"/><rect x="952" y="125" fill="#00993d"/><rect x="964" y="125" fill="#00993d"/><rect x="976" y="125" fill="#00993e"/><rect x="988" y="125" fill="#00993e"/><rect x="1000" y="125" fill="#00993f"/><rect x="1012" y="125" fill="#00993f"/><rect x="1024" y="125" fill="#009940"/><rect x="1036" y="125" fill="#009941"/><rect x="1048" y="125" fill="#009941"/><rect x="1060" y="125" fill="#009942"/><rect x="1420" y="125" fill="#990004"/><rect x="1432" y="125" fill="#990003"/><rect x="1444" y="125" fill="#990003"/><rect x="1456" y="125" fill="#990002"/><rect x="1468" y="125" fill="#990002"/><rect x="1480" y="125" fill="#990001"/><rect x="1492" y="125" fill="#990001"/><rect x="1504" y="125" fill="#990001"/><rect x="1516" y="125" fill="#990000"/><rect x="1528" y="125" fill="#990000"/><rect x="1540" y="125" fill="#990000"/><rect x="1552" y="125" fill="#990000"/><rect x="1564" y="125" fill="#990000"/><rect x="1576" y="125" fill="#990000"/><rect x="952" y="135" fill="#00994f"/><rect x="964" y="135" fill="#00994b"/><rect x="976" y="135" fill="#00994c"/><rect x="988" y="135" fill="#00994d"/><rect x="1000" y="135" fill="#00994e"/><rect x="1012" y="135" fill="#00994f"/><rect x="1024" y="135" fill="#009950"/><rect x="1036" y="135" fill="#009951"/><rect x="1048" y="135" fill="#009952"/><rect x="1060" y="135" fill="#009954"/><rect x="1408" y="135" fill="#990009"/><rect x="1420" y="135" fill="#990008"/><rect x="1432" y="135" fill="#990007"/><rect x="1444" y="135" fill="#990007"/><rect x="1456" y="135" fill="#990006"/><rect x="1468" y="135" fill="#990005"/><rect x="1480" y="135" fill="#990005"/><rect x="1492" y="135" fill="#990004"/><rect x="1504" y="135" fill="#990004"/><rect x="1516" y="135" fill="#990003"/><rect x="1528" y="135" fill="#990003"/><rect x="1540" y="135" fill="#990003"/><rect x="1552" y="135" fill="#990002"/><rect x="1564" y="135" fill="#990003"/><rect x="952" y="145" fill="#00995d"/><rect x="964" y="145" fill="#009959"/><rect x="976" y="145" fill="#00995a"/><rect x="988" y="145" fill="#00995c"/><rect x="1000" y="145" fill="#00995d"/><rect x="1012" y="145" fill="#00995f"/><rect x="1024" y="145" fill="#009961"/><rect x="1036" y="145" fill="#009962"/><rect x="1048" y="145" fill="#009964"/><rect x="1060" y="145" fill="#009966"/><rect x="1396" y="145" fill="#99000e"/><rect x="1408" y="145" fill="#99000d"/><rect x="1420" y="145" fill="#99000c"/><rect x="1432" y="145" fill="#99000b"/><rect x="1444" y="145" fill="#99000b"/><rect x="1456" y="145" fill="#99000a"/><rect x="1468" y="145" fill="#990009"/><rect x="1480" y="145" fill="#990008"/><rect x="1492" y="145" fill="#990008"/><rect x="1504" y="145" fill="#990007"/><rect x="1516" y="145" fill="#990007"/><rect x="1528" y="145" fill="#990006"/><rect x="1540" y="145" fill="#990006"/><rect x="1552" y="145" fill="#990007"/><rect x="952" y="155" fill="#00996b"/><rect x="964" y="155" fill="#009968"/><rect x="976" y="155" fill="#00996a"/><rect x="988" y="155" fill="#00996c"/><rect x="1000" y="155" fill="#00996e"/><rect x="1012" y="155" fill="#009970"/><rect x="1024" y="155" fill="#009972"/><rect x="1036" y="155" fill="#009975"/><rect x="1048" y="155" fill="#009978"/><rect x="1060" y="155" fill="#00997b"/><rect x="1384" y="155" fill="#990014"/><rect x="1396" y="155" fill="#990013"/><rect x="1408" y="155" fill="#990012"/><rect x="1420" y="155" fill="#990011"/><rect x="1432" y="155" fill="#990010"/><rect x="1444" y="155" fill="#99000f"/><rect x="1456" y="155" fill="#99000e"/><rect x="1468" y="155" fill="#99000d"/><rect x="1480" y="155" fill="#99000c"/><rect x="1492" y="155" fill="#99000b"/><rect x="1504" y="155" fill="#99000b"/><rect x="1516" y="155" fill="#99000a"/><rect x="1528" y="155" fill="#990009"/><rect x="1540" y="155" fill="#99000a"/><rect x="952" y="165" fill="#00997f"/><rect x="964" y="165" fill="#009977"/><rect x="976" y="165" fill="#00997a"/><rect x="988" y="165" fill="#00997c"/><rect x="1000" y="165" fill="#00997f"/><rect x="1012" y="165" fill="#009982"/><rect x="1024" y="165" fill="#009985"/><rect x="1036" y="165" fill="#009988"/><rect x="1048" y="165" fill="#00998c"/><rect x="1060" y="165" fill="#009990"/><rect x="1072" y="165" fill="#009994"/><rect x="1372" y="165" fill="#99001b"/><rect x="1384" y="165" fill="#990019"/><rect x="1396" y="165" fill="#990018"/><rect x="1408" y="165" fill="#990016"/><rect x="1420" y="165" fill="#990015"/><rect x="1432" y="165" fill="#990014"/><rect x="1444" y="165" fill="#990013"/><rect x="1456" y="165" fill="#990012"/><rect x="1468" y="165" fill="#990011"/><rect x="1480" y="165" fill="#990010"/><rect x="1492" y="165" fill="#99000f"/><rect x="1504" y="165" fill="#99000e"/><rect x="1516" y="165" fill="#99000d"/><rect x="1528" y="165" fill="#99000d"/><rect x="964" y="175" fill="#009988"/><rect x="976" y="175" fill="#00998b"/><rect x="988" y="175" fill="#00998e"/><rect x="1000" y="175" fill="#009991"/><rect x="1012" y="175" fill="#009995"/><rect x="1024" y="175" fill="#009999"/><rect x="1036" y="175" fill="#009599"/><rect x="1048" y="175" fill="#009099"/><rect x="1060" y="175" fill="#008c99"/><rect x="1072" y="175" fill="#008899"/><rect x="1360" y="175" fill="#990022"/><rect x="1372" y="175" fill="#990020"/><rect x="1384" y="175" fill="#99001e"/><rect x="1396" y="175" fill="#99001c"/><rect x="1408" y="175" fill="#99001b"/><rect x="1420" y="175" fill="#990019"/><rect x="1432" y="175" fill="#990018"/><rect x="1444" y="175" fill="#990017"/><rect x="1456" y="175" fill="#990016"/><rect x="1468" y="175" fill="#990014"/><rect x="1480" y="175" fill="#990013"/><rect x="1492" y="175" fill="#990012"/><rect x="1504" y="175" fill="#990012"/><rect x="1516" y="175" fill="#990011"/><rect x="1528" y="175" fill="#990011"/><rect x="964" y="185" fill="#009499"/><rect x="976" y="185" fill="#009599"/><rect x="988" y="185" fill="#009299"/><rect x="1000" y="185" fill="#008e99"/><rect x="1012" y="185" fill="#008a99"/><rect x="1024" y="185" fill="#008699"/><rect x="1036" y="185" fill="#008299"/><rect x="1048" y="185" fill="#007e99"/><rect x="1060" y="185" fill="#007a99"/><rect x="1072" y="185" fill="#007699"/><rect x="1348" y="185" fill="#990029"/><rect x="1360" y="185" fill="#990027"/><rect x="1372" y="185" fill="#990025"/><rect x="1384" y="185" fill="#990023"/><rect x="1396" y="185" fill="#990021"/><rect x="1408" y="185" fill="#99001f"/><rect x="1420" y="185" fill="#99001e"/><rect x="1432" y="185" fill="#99001c"/><rect x="1444" y="185" fill="#99001b"/><rect x="1456" y="185" fill="#990019"/><rect x="1468" y="185" fill="#990018"/><rect x="1480" y="185" fill="#990017"/><rect x="1492" y="185" fill="#990016"/><rect x="1504" y="185" fill="#990015"/><rect x="1516" y="185" fill="#990016"/><rect x="964" y="195" fill="#008599"/><rect x="976" y="195" fill="#008599"/><rect x="988" y="195" fill="#008299"/><rect x="1000" y="195" fill="#007e99"/><rect x="1012" y="195" fill="#007a99"/><rect x="1024" y="195" fill="#007799"/><rect x="1036" y="195" fill="#007399"/><rect x="1048" y="195" fill="#006f99"/><rect x="1060" y="195" fill="#006b99"/><rect x="1072" y="195" fill="#006799"/><rect x="1336" y="195" fill="#990032"/><rect x="1348" y="195" fill="#99002f"/><rect x="1360" y="195" fill="#99002d"/><rect x="1372" y="195" fill="#99002a"/><rect x="1384" y="195" fill="#990028"/><rect x="1396" y="195" fill="#990026"/><rect x="1408" y="195" fill="#990024"/><rect x="1420" y="195" fill="#990022"/><rect x="1432" y="195" fill="#990020"/><rect x="1444" y="195" fill="#99001f"/><rect x="1456" y="195" fill="#99001d"/><rect x="1468" y="195" fill="#99001c"/><rect x="1480" y="195" fill="#99001b"/><rect x="1492" y="195" fill="#99001a"/><rect x="1504" y="195" fill="#99001a"/><rect x="976" y="205" fill="#007799"/><rect x="988" y="205" fill="#007499"/><rect x="1000" y="205" fill="#007199"/><rect x="1012" y="205" fill="#006d99"/><rect x="1024" y="205" fill="#006a99"/><rect x="1036" y="205" fill="#006699"/><rect x="1048" y="205" fill="#006299"/><rect x="1060" y="205" fill="#005f99"/><rect x="1072" y="205" fill="#005b99"/><rect x="1336" y="205" fill="#990038"/><rect x="1348" y="205" fill="#990035"/><rect x="1360" y="205" fill="#990032"/><rect x="1372" y="205" fill="#99002f"/><rect x="1384" y="205" fill="#99002d"/><rect x="1396" y="205" fill="#99002b"/><rect x="1408" y="205" fill="#990028"/><rect x="1420" y="205" fill="#990027"/><rect x="1432" y="205" fill="#990025"/><rect x="1444" y="205" fill="#990023"/><rect x="1456" y="205" fill="#990021"/><rect x="1468" y="205" fill="#990020"/><rect x="1480" y="205" fill="#99001f"/><rect x="1492" y="205" fill="#99001f"/><rect x="976" y="215" fill="#006999"/><rect x="988" y="215" fill="#006999"/><rect x="1000" y="215" fill="#006599"/><rect x="1012" y="215" fill="#006299"/><rect x="1024" y="215" fill="#005f99"/><rect x="1036" y="215" fill="#005b99"/><rect x="1048" y="215" fill="#005899"/><rect x="1060" y="215" fill="#005499"/><rect x="1072" y="215" fill="#005199"/><rect x="1084" y="215" fill="#004d99"/><rect x="1324" y="215" fill="#990042"/><rect x="1336" y="215" fill="#99003e"/><rect x="1348" y="215" fill="#99003b"/><rect x="1360" y="215" fill="#990038"/><rect x="1372" y="215" fill="#990035"/><rect x="1384" y="215" fill="#990032"/><rect x="1396" y="215" fill="#99002f"/><rect x="1408" y="215" fill="#99002d"/><rect x="1420" y="215" fill="#99002b"/><rect x="1432" y="215" fill="#990029"/><rect x="1444" y="215" fill="#990027"/><rect x="1456" y="215" fill="#990025"/><rect x="1468" y="215" fill="#990024"/><rect x="1480" y="215" fill="#990022"/><rect x="976" y="225" fill="#006099"/><rect x="988" y="225" fill="#005e99"/><rect x="1000" y="225" fill="#005b99"/><rect x="1012" y="225" fill="#005899"/><rect x="1024" y="225" fill="#005599"/><rect x="1036" y="225" fill="#005299"/><rect x="1048" y="225" fill="#004e99"/><rect x="1060" y="225" fill="#004b99"/><rect x="1072" y="225" fill="#004899"/><rect x="1084" y="225" fill="#004499"/><rect x="1312" y="225" fill="#99004e"/><rect x="1324" y="225" fill="#990049"/><rect x="1336" y="225" fill="#990045"/><rect x="1348" y="225" fill="#990041"/><rect x="1360" y="225" fill="#99003d"/><rect x="1372" y="225" fill="#99003a"/><rect x="1384" y="225" fill="#990037"/><rect x="1396" y="225" fill="#990034"/><rect x="1408" y="225" fill="#990032"/><rect x="1420" y="225" fill="#990030"/><rect x="1432" y="225" fill="#99002d"/><rect x="1444" y="225" fill="#99002b"/><rect x="1456" y="225" fill="#99002a"/><rect x="1468" y="225" fill="#990028"/><rect x="1480" y="225" fill="#990028"/><rect x="988" y="235" fill="#005699"/><rect x="1000" y="235" fill="#005399"/><rect x="1012" y="235" fill="#005099"/><rect x="1024" y="235" fill="#004d99"/><rect x="1036" y="235" fill="#004999"/><rect x="1048" y="235" fill="#004699"/><rect x="1060" y="235" fill="#004399"/><rect x="1072" y="235" fill="#004099"/><rect x="1084" y="235" fill="#003d99"/><rect x="1300" y="235" fill="#99005b"/><rect x="1312" y="235" fill="#990055"/><rect x="1324" y="235" fill="#990050"/><rect x="1336" y="235" fill="#99004b"/><rect x="1348" y="235" fill="#990047"/><rect x="1360" y="235" fill="#990043"/><rect x="1372" y="235" fill="#990040"/><rect x="1384" y="235" fill="#99003c"/><rect x="1396" y="235" fill="#990039"/><rect x="1408" y="235" fill="#990037"/><rect x="1420" y="235" fill="#990034"/><rect x="1432" y="235" fill="#990032"/><rect x="1444" y="235" fill="#990030"/><rect x="1456" y="235" fill="#99002e"/><rect x="1468" y="235" fill="#99002d"/><rect x="988" y="245" fill="#004d99"/><rect x="1000" y="245" fill="#004b99"/><rect x="1012" y="245" fill="#004899"/><rect x="1024" y="245" fill="#004599"/><rect x="1036" y="245" fill="#004299"/><rect x="1048" y="245" fill="#003f99"/><rect x="1060" y="245" fill="#003c99"/><rect x="1072" y="245" fill="#003999"/><rect x="1084" y="245" fill="#003699"/><rect x="1288" y="245" fill="#990069"/><rect x="1300" y="245" fill="#990062"/><rect x="1312" y="245" fill="#99005c"/><rect x="1324" y="245" fill="#990056"/><rect x="1336" y="245" fill="#990051"/><rect x="1348" y="245" fill="#99004d"/><rect x="1360" y="245" fill="#990049"/><rect x="1372" y="245" fill="#990045"/><rect x="1384" y="245" fill="#990042"/><rect x="1396" y="245" fill="#99003e"/><rect x="1408" y="245" fill="#99003c"/><rect x="1420" y="245" fill="#990039"/><rect x="1432" y="245" fill="#990036"/><rect x="1444" y="245" fill="#990034"/><rect x="1456" y="245" fill="#990034"/><rect x="1000" y="255" fill="#004499"/><rect x="1012" y="255" fill="#004199"/><rect x="1024" y="255" fill="#003f99"/><rect x="1036" y="255" fill="#003c99"/><rect x="1048" y="255" fill="#003999"/><rect x="1060" y="255" fill="#003699"/><rect x="1072" y="255" fill="#003399"/><rect x="1084" y="255" fill="#003099"/><rect x="1276" y="255" fill="#99007a"/><rect x="1288" y="255" fill="#990072"/><rect x="1300" y="255" fill="#99006a"/><rect x="1312" y="255" fill="#990063"/><rect x="1324" y="255" fill="#99005d"/><rect x="1336" y="255" fill="#990058"/><rect x="1348" y="255" fill="#990053"/><rect x="1360" y="255" fill="#99004f"/><rect x="1372" y="255" fill="#99004b"/><rect x="1384" y="255" fill="#990047"/><rect x="1396" y="255" fill="#990044"/><rect x="1408" y="255" fill="#990040"/><rect x="1420" y="255" fill="#99003e"/><rect x="1432" y="255" fill="#99003b"/><rect x="1444" y="255" fill="#99003a"/><rect x="1000" y="265" fill="#003e99"/><rect x="1012" y="265" fill="#003c99"/><rect x="1024" y="265" fill="#003999"/><rect x="1036" y="265" fill="#003699"/><rect x="1048" y="265" fill="#003399"/><rect x="1060" y="265" fill="#003199"/><rect x="1072" y="265" fill="#002e99"/><rect x="1084" y="265" fill="#002b99"/><rect x="1096" y="265" fill="#002899"/><rect x="1264" y="265" fill="#99008e"/><rect x="1276" y="265" fill="#990083"/><rect x="1288" y="265" fill="#99007a"/><rect x="1300" y="265" fill="#990072"/><rect x="1312" y="265" fill="#99006b"/><rect x="1324" y="265" fill="#990064"/><rect x="1336" y="265" fill="#99005f"/><rect x="1348" y="265" fill="#990059"/><rect x="1360" y="265" fill="#990055"/><rect x="1372" y="265" fill="#990050"/><rect x="1384" y="265" fill="#99004c"/><rect x="1396" y="265" fill="#990049"/><rect x="1408" y="265" fill="#990045"/><rect x="1420" y="265" fill="#990042"/><rect x="1432" y="265" fill="#99003f"/><rect x="1012" y="275" fill="#003699"/><rect x="1024" y="275" fill="#003499"/><rect x="1036" y="275" fill="#003199"/><rect x="1048" y="275" fill="#002e99"/><rect x="1060" y="275" fill="#002c99"/><rect x="1072" y="275" fill="#002999"/><rect x="1084" y="275" fill="#002699"/><rect x="1096" y="275" fill="#002399"/><rect x="1252" y="275" fill="#8e0099"/><rect x="1264" y="275" fill="#990098"/><rect x="1276" y="275" fill="#99008d"/><rect x="1288" y="275" fill="#990083"/><rect x="1300" y="275" fill="#99007a"/><rect x="1312" y="275" fill="#990072"/><rect x="1324" y="275" fill="#99006b"/><rect x="1336" y="275" fill="#990065"/><rect x="1348" y="275" fill="#990060"/><rect x="1360" y="275" fill="#99005b"/><rect x="1372" y="275" fill="#990056"/><rect x="1384" y="275" fill="#990052"/><rect x="1396" y="275" fill="#99004e"/><rect x="1408" y="275" fill="#99004a"/><rect x="1420" y="275" fill="#990047"/><rect x="1432" y="275" fill="#990046"/><rect x="1012" y="285" fill="#003199"/><rect x="1024" y="285" fill="#002f99"/><rect x="1036" y="285" fill="#002c99"/><rect x="1048" y="285" fill="#002a99"/><rect x="1060" y="285" fill="#002799"/><rect x="1072" y="285" fill="#002599"/><rect x="1084" y="285" fill="#002299"/><rect x="1096" y="285" fill="#001f99"/><rect x="1240" y="285" fill="#790099"/><rect x="1252" y="285" fill="#850099"/><rect x="1264" y="285" fill="#900099"/><rect x="1276" y="285" fill="#990096"/><rect x="1288" y="285" fill="#99008c"/><rect x="1300" y="285" fill="#990082"/><rect x="1312" y="285" fill="#99007a"/><rect x="1324" y="285" fill="#990073"/><rect x="1336" y="285" fill="#99006c"/><rect x="1348" y="285" fill="#990066"/><rect x="1360" y="285" fill="#990061"/><rect x="1372" y="285" fill="#99005c"/><rect x="1384" y="285" fill="#990057"/><rect x="1396" y="285" fill="#990053"/><rect x="1408" y="285" fill="#99004f"/><rect x="1420" y="285" fill="#99004e"/><rect x="1024" y="295" fill="#002b99"/><rect x="1036" y="295" fill="#002899"/><rect x="1048" y="295" fill="#002699"/><rect x="1060" y="295" fill="#002399"/><rect x="1072" y="295" fill="#002199"/><rect x="1084" y="295" fill="#001e99"/><rect x="1096" y="295" fill="#001c99"/><rect x="1228" y="295" fill="#670099"/><rect x="1240" y="295" fill="#720099"/><rect x="1252" y="295" fill="#7c0099"/><rect x="1264" y="295" fill="#870099"/><rect x="1276" y="295" fill="#920099"/><rect x="1288" y="295" fill="#990095"/><rect x="1300" y="295" fill="#99008b"/><rect x="1312" y="295" fill="#990082"/><rect x="1324" y="295" fill="#99007a"/><rect x="1336" y="295" fill="#990073"/><rect x="1348" y="295" fill="#99006d"/><rect x="1360" y="295" fill="#990067"/><rect x="1372" y="295" fill="#990062"/><rect x="1384" y="295" fill="#99005d"/><rect x="1396" y="295" fill="#990059"/><rect x="1408" y="295" fill="#990056"/><rect x="1024" y="305" fill="#002799"/><rect x="1036" y="305" fill="#002499"/><rect x="1048" y="305" fill="#002299"/><rect x="1060" y="305" fill="#002099"/><rect x="1072" y="305" fill="#001d99"/><rect x="1084" y="305" fill="#001b99"/><rect x="1096" y="305" fill="#001899"/><rect x="1216" y="305" fill="#570099"/><rect x="1228" y="305" fill="#610099"/><rect x="1240" y="305" fill="#6b0099"/><rect x="1252" y="305" fill="#750099"/><rect x="1264" y="305" fill="#7f0099"/><rect x="1276" y="305" fill="#8a0099"/><rect x="1288" y="305" fill="#940099"/><rect x="1300" y="305" fill="#990093"/><rect x="1312" y="305" fill="#99008a"/><rect x="1324" y="305" fill="#990081"/><rect x="1336" y="305" fill="#99007a"/><rect x="1348" y="305" fill="#990073"/><rect x="1360" y="305" fill="#99006d"/><rect x="1372" y="305" fill="#990068"/><rect x="1384" y="305" fill="#990063"/><rect x="1396" y="305" fill="#990060"/><rect x="1036" y="315" fill="#002199"/><rect x="1048" y="315" fill="#001e99"/><rect x="1060" y="315" fill="#001c99"/><rect x="1072" y="315" fill="#001a99"/><rect x="1084" y="315" fill="#001799"/><rect x="1096" y="315" fill="#001599"/><rect x="1108" y="315" fill="#001399"/><rect x="1204" y="315" fill="#480099"/><rect x="1216" y="315" fill="#520099"/><rect x="1228" y="315" fill="#5b0099"/><rect x="1240" y="315" fill="#650099"/><rect x="1252" y="315" fill="#6e0099"/><rect x="1264" y="315" fill="#780099"/><rect x="1276" y="315" fill="#820099"/><rect x="1288" y="315" fill="#8c0099"/><rect x="1300" y="315" fill="#960099"/><rect x="1312" y="315" fill="#990092"/><rect x="1324" y="315" fill="#990089"/><rect x="1336" y="315" fill="#990081"/><rect x="1348" y="315" fill="#99007a"/><rect x="1360" y="315" fill="#990073"/><rect x="1372" y="315" fill="#99006e"/><rect x="1384" y="315" fill="#990068"/><rect x="1036" y="325" fill="#001e99"/><rect x="1048" y="325" fill="#001b99"/><rect x="1060" y="325" fill="#001999"/><rect x="1072" y="325" fill="#001799"/><rect x="1084" y="325" fill="#001599"/><rect x="1096" y="325" fill="#001299"/><rect x="1108" y="325" fill="#001099"/><rect x="1192" y="325" fill="#3b0099"/><rect x="1204" y="325" fill="#440099"/><rect x="1216" y="325" fill="#4d0099"/><rect x="1228" y="325" fill="#560099"/><rect x="1240" y="325" fill="#5f0099"/><rect x="1252" y="325" fill="#680099"/><rect x="1264" y="325" fill="#720099"/><rect x="1276" y="325" fill="#7b0099"/><rect x="1288" y="325" fill="#850099"/><rect x="1300" y="325" fill="#8e0099"/><rect x="1312" y="325" fill="#980099"/><rect x="1324" y="325" fill="#990091"/><rect x="1336" y="325" fill="#990088"/><rect x="1348" y="325" fill="#990081"/><rect x="1360" y="325" fill="#99007a"/><rect x="1372" y="325" fill="#990074"/><rect x="1384" y="325" fill="#990070"/><rect x="1048" y="335" fill="#001999"/><rect x="1060" y="335" fill="#001699"/><rect x="1072" y="335" fill="#001499"/><rect x="1084" y="335" fill="#001299"/><rect x="1096" y="335" fill="#001099"/><rect x="1108" y="335" fill="#000d99"/><rect x="1180" y="335" fill="#2f0099"/><rect x="1192" y="335" fill="#370099"/><rect x="1204" y="335" fill="#400099"/><rect x="1216" y="335" fill="#490099"/><rect x="1228" y="335" fill="#510099"/><rect x="1240" y="335" fill="#5a0099"/><rect x="1252" y="335" fill="#630099"/><rect x="1264" y="335" fill="#6c0099"/><rect x="1276" y="335" fill="#750099"/><rect x="1288" y="335" fill="#7e0099"/><rect x="1300" y="335" fill="#870099"/><rect x="1312" y="335" fill="#900099"/><rect x="1324" y="335" fill="#990098"/><rect x="1336" y="335" fill="#99008f"/><rect x="1348" y="335" fill="#990088"/><rect x="1360" y="335" fill="#990080"/><rect x="1372" y="335" fill="#99007c"/><rect x="1048" y="345" fill="#001699"/><rect x="1060" y="345" fill="#001499"/><rect x="1072" y="345" fill="#001299"/><rect x="1084" y="345" fill="#000f99"/><rect x="1096" y="345" fill="#000d99"/><rect x="1108" y="345" fill="#000b99"/><rect x="1168" y="345" fill="#240099"/><rect x="1180" y="345" fill="#2c0099"/><rect x="1192" y="345" fill="#340099"/><rect x="1204" y="345" fill="#3c0099"/><rect x="1216" y="345" fill="#450099"/><rect x="1228" y="345" fill="#4d0099"/><rect x="1240" y="345" fill="#550099"/><rect x="1252" y="345" fill="#5e0099"/><rect x="1264" y="345" fill="#660099"/><rect x="1276" y="345" fill="#6f0099"/><rect x="1288" y="345" fill="#780099"/><rect x="1300" y="345" fill="#800099"/><rect x="1312" y="345" fill="#890099"/><rect x="1324" y="345" fill="#920099"/><rect x="1336" y="345" fill="#990097"/><rect x="1348" y="345" fill="#99008f"/><rect x="1360" y="345" fill="#990089"/><rect x="1060" y="355" fill="#001299"/><rect x="1072" y="355" fill="#000f99"/><rect x="1084" y="355" fill="#000d99"/><rect x="1096" y="355" fill="#000b99"/><rect x="1108" y="355" fill="#000999"/><rect x="1156" y="355" fill="#1a0199"/><rect x="1168" y="355" fill="#220099"/><rect x="1180" y="355" fill="#290099"/><rect x="1192" y="355" fill="#310099"/><rect x="1204" y="355" fill="#390099"/><rect x="1216" y="355" fill="#410099"/><rect x="1228" y="355" fill="#490099"/><rect x="1240" y="355" fill="#510099"/><rect x="1252" y="355" fill="#590099"/><rect x="1264" y="355" fill="#610099"/><rect x="1276" y="355" fill="#690099"/><rect x="1288" y="355" fill="#720099"/><rect x="1300" y="355" fill="#7a0099"/><rect x="1312" y="355" fill="#830099"/><rect x="1324" y="355" fill="#8b0099"/><rect x="1336" y="355" fill="#940099"/><rect x="1348" y="355" fill="#990098"/><rect x="1072" y="365" fill="#000d99"/><rect x="1084" y="365" fill="#000b99"/><rect x="1096" y="365" fill="#000999"/><rect x="1108" y="365" fill="#000799"/><rect x="1120" y="365" fill="#020599"/><rect x="1144" y="365" fill="#110199"/><rect x="1156" y="365" fill="#180099"/><rect x="1168" y="365" fill="#1f0099"/><rect x="1180" y="365" fill="#270099"/><rect x="1192" y="365" fill="#2e0099"/><rect x="1204" y="365" fill="#360099"/><rect x="1216" y="365" fill="#3d0099"/><rect x="1228" y="365" fill="#450099"/><rect x="1240" y="365" fill="#4d0099"/><rect x="1252" y="365" fill="#550099"/><rect x="1264" y="365" fill="#5c0099"/><rect x="1276" y="365" fill="#640099"/><rect x="1288" y="365" fill="#6c0099"/><rect x="1300" y="365" fill="#740099"/><rect x="1312" y="365" fill="#7d0099"/><rect x="1324" y="365" fill="#850099"/><rect x="1336" y="365" fill="#8b0099"/><rect x="1072" y="375" fill="#000c99"/><rect x="1084" y="375" fill="#000999"/><rect x="1096" y="375" fill="#000799"/><rect x="1108" y="375" fill="#000599"/><rect x="1120" y="375" fill="#010399"/><rect x="1132" y="375" fill="#080199"/><rect x="1144" y="375" fill="#0f0099"/><rect x="1156" y="375" fill="#160099"/><rect x="1168" y="375" fill="#1d0099"/><rect x="1180" y="375" fill="#250099"/><rect x="1192" y="375" fill="#2c0099"/><rect x="1204" y="375" fill="#330099"/><rect x="1216" y="375" fill="#3a0099"/><rect x="1228" y="375" fill="#420099"/><rect x="1240" y="375" fill="#490099"/><rect x="1252" y="375" fill="#510099"/><rect x="1264" y="375" fill="#580099"/><rect x="1276" y="375" fill="#600099"/><rect x="1288" y="375" fill="#670099"/><rect x="1300" y="375" fill="#6f0099"/><rect x="1312" y="375" fill="#770099"/><rect x="1324" y="375" fill="#7f0099"/><rect x="1336" y="375" fill="#840099"/><rect x="1084" y="385" fill="#000899"/><rect x="1096" y="385" fill="#000599"/><rect x="1108" y="385" fill="#000399"/><rect x="1120" y="385" fill="#010299"/><rect x="1132" y="385" fill="#070099"/><rect x="1144" y="385" fill="#0e0099"/><rect x="1156" y="385" fill="#150099"/><rect x="1168" y="385" fill="#1c0099"/><rect x="1180" y="385" fill="#220099"/><rect x="1192" y="385" fill="#290099"/><rect x="1204" y="385" fill="#300099"/><rect x="1216" y="385" fill="#370099"/><rect x="1228" y="385" fill="#3e0099"/><rect x="1240" y="385" fill="#460099"/><rect x="1252" y="385" fill="#4d0099"/><rect x="1264" y="385" fill="#540099"/><rect x="1276" y="385" fill="#5b0099"/><rect x="1288" y="385" fill="#630099"/><rect x="1300" y="385" fill="#6a0099"/><rect x="1312" y="385" fill="#720099"/><rect x="1324" y="385" fill="#780099"/><rect x="1096" y="395" fill="#000499"/><rect x="1108" y="395" fill="#000299"/><rect x="1120" y="395" fill="#000099"/><rect x="1132" y="395" fill="#060099"/><rect x="1144" y="395" fill="#0d0099"/><rect x="1156" y="395" fill="#130099"/><rect x="1168" y="395" fill="#1a0099"/><rect x="1180" y="395" fill="#200099"/><rect x="1192" y="395" fill="#270099"/><rect x="1204" y="395" fill="#2e0099"/><rect x="1216" y="395" fill="#350099"/><rect x="1228" y="395" fill="#3b0099"/><rect x="1240" y="395" fill="#420099"/><rect x="1252" y="395" fill="#490099"/><rect x="1264" y="395" fill="#500099"/><rect x="1276" y="395" fill="#570099"/><rect x="1288" y="395" fill="#5f0099"/><rect x="1300" y="395" fill="#660099"/><rect x="1312" y="395" fill="#6c0099"/><rect x="1096" y="405" fill="#000399"/><rect x="1108" y="405" fill="#000099"/><rect x="1120" y="405" fill="#000099"/><rect x="1132" y="405" fill="#050099"/><rect x="1144" y="405" fill="#0b0099"/><rect x="1156" y="405" fill="#120099"/><rect x="1168" y="405" fill="#180099"/><rect x="1180" y="405" fill="#1e0099"/><rect x="1192" y="405" fill="#250099"/><rect x="1204" y="405" fill="#2b0099"/><rect x="1216" y="405" fill="#320099"/><rect x="1228" y="405" fill="#390099"/><rect x="1240" y="405" fill="#3f0099"/><rect x="1252" y="405" fill="#460099"/><rect x="1264" y="405" fill="#4d0099"/><rect x="1276" y="405" fill="#540099"/><rect x="1288" y="405" fill="#5a0099"/><rect x="1300" y="405" fill="#610099"/><rect x="1108" y="415" fill="#000099"/><rect x="1120" y="415" fill="#000099"/><rect x="1132" y="415" fill="#040099"/><rect x="1144" y="415" fill="#0a0099"/><rect x="1156" y="415" fill="#100099"/><rect x="1168" y="415" fill="#160099"/><rect x="1180" y="415" fill="#1d0099"/><rect x="1192" y="415" fill="#230099"/><rect x="1204" y="415" fill="#290099"/><rect x="1216" y="415" fill="#300099"/><rect x="1228" y="415" fill="#360099"/><rect x="1240" y="415" fill="#3c0099"/><rect x="1252" y="415" fill="#430099"/><rect x="1264" y="415" fill="#4a0099"/><rect x="1276" y="415" fill="#500099"/><rect x="1288" y="415" fill="#560099"/><rect x="1108" y="425" fill="#000099"/><rect x="1120" y="425" fill="#000099"/><rect x="1132" y="425" fill="#030099"/><rect x="1144" y="425" fill="#090099"/><rect x="1156" y="425" fill="#0f0099"/><rect x="1168" y="425" fill="#150099"/><rect x="1180" y="425" fill="#1b0099"/><rect x="1192" y="425" fill="#210099"/><rect x="1204" y="425" fill="#270099"/><rect x="1216" y="425" fill="#2d0099"/><rect x="1228" y="425" fill="#340099"/><rect x="1240" y="425" fill="#3a0099"/><rect x="1252" y="425" fill="#400099"/><rect x="1264" y="425" fill="#460099"/><rect x="1276" y="425" fill="#4d0099"/><rect x="1120" y="435" fill="#000099"/><rect x="1132" y="435" fill="#020099"/><rect x="1144" y="435" fill="#080099"/><rect x="1156" y="435" fill="#0e0099"/><rect x="1168" y="435" fill="#140099"/><rect x="1180" y="435" fill="#190099"/><rect x="1192" y="435" fill="#1f0099"/><rect x="1204" y="435" fill="#250099"/><rect x="1216" y="435" fill="#2b0099"/><rect x="1228" y="435" fill="#310099"/><rect x="1240" y="435" fill="#370099"/><rect x="1252" y="435" fill="#3d0099"/><rect x="1264" y="435" fill="#440099"/><rect x="1276" y="435" fill="#490099"/><rect x="1132" y="445" fill="#020099"/><rect x="1144" y="445" fill="#070099"/><rect x="1156" y="445" fill="#0d0099"/><rect x="1168" y="445" fill="#120099"/><rect x="1180" y="445" fill="#180099"/><rect x="1192" y="445" fill="#1e0099"/><rect x="1204" y="445" fill="#230099"/><rect x="1216" y="445" fill="#290099"/><rect x="1228" y="445" fill="#2f0099"/><rect x="1240" y="445" fill="#350099"/><rect x="1252" y="445" fill="#3b0099"/><rect x="1264" y="445" fill="#410099"/><rect x="1144" y="455" fill="#060099"/><rect x="1156" y="455" fill="#0c0099"/><rect x="1168" y="455" fill="#110099"/><rect x="1180" y="455" fill="#170099"/><rect x="1192" y="455" fill="#1c0099"/><rect x="1204" y="455" fill="#220099"/><rect x="1216" y="455" fill="#270099"/><rect x="1228" y="455" fill="#2d0099"/><rect x="1240" y="455" fill="#330099"/><rect x="1252" y="455" fill="#380099"/><rect x="1144" y="465" fill="#060099"/><rect x="1156" y="465" fill="#0b0099"/><rect x="1168" y="465" fill="#100099"/><rect x="1180" y="465" fill="#150099"/><rect x="1192" y="465" fill="#1b0099"/><rect x="1204" y="465" fill="#200099"/><rect x="1216" y="465" fill="#260099"/><rect x="1228" y="465" fill="#2b0099"/><rect x="1240" y="465" fill="#310099"/><rect x="1156" y="475" fill="#0b0099"/><rect x="1168" y="475" fill="#0f0099"/><rect x="1180" y="475" fill="#140099"/><rect x="1192" y="475" fill="#190099"/><rect x="1204" y="475" fill="#1f0099"/><rect x="1216" y="475" fill="#240099"/><rect x="1228" y="475" fill="#290099"/><rect x="1168" y="485" fill="#0e0099"/><rect x="1180" y="485" fill="#130099"/><rect x="1192" y="485" fill="#180099"/><rect x="1204" y="485" fill="#1d0099"/><rect x="1216" y="485" fill="#220099"/><rect x="1228" y="485" fill="#280099"/><rect x="1180" y="495" fill="#120099"/><rect x="1192" y="495" fill="#170099"/><rect x="1204" y="495" fill="#1c0099"/><rect x="1216" y="495" fill="#210099"/><rect x="1192" y="505" fill="#160099"/><rect x="1204" y="505" fill="#1b0099"/></g></g><g clip-path="url(#cpTri)"><g style="filter:blur(4px)" class="cl2"><rect x="1040" y="65" fill="#00ff00"/><rect x="1040" y="73" fill="#00ff00"/><rect x="1050" y="73" fill="#00ff00"/><rect x="1060" y="73" fill="#00ff00"/><rect x="1070" y="73" fill="#01ff00"/><rect x="1080" y="73" fill="#1aff00"/><rect x="1090" y="73" fill="#34ff00"/><rect x="1100" y="73" fill="#50ff00"/><rect x="1110" y="73" fill="#70ff00"/><rect x="1120" y="73" fill="#8fff00"/><rect x="1040" y="81" fill="#00ff01"/><rect x="1050" y="81" fill="#00ff00"/><rect x="1060" y="81" fill="#00ff00"/><rect x="1070" y="81" fill="#00ff00"/><rect x="1080" y="81" fill="#17ff00"/><rect x="1090" y="81" fill="#32ff00"/><rect x="1100" y="81" fill="#4eff00"/><rect x="1110" y="81" fill="#6dff00"/><rect x="1120" y="81" fill="#8dff00"/><rect x="1130" y="81" fill="#afff00"/><rect x="1140" y="81" fill="#d4ff00"/><rect x="1150" y="81" fill="#fbff00"/><rect x="1160" y="81" fill="#ffde00"/><rect x="1170" y="81" fill="#ffc000"/><rect x="1180" y="81" fill="#ffa800"/><rect x="1190" y="81" fill="#ff9400"/><rect x="1200" y="81" fill="#ff8300"/><rect x="1050" y="89" fill="#00ff10"/><rect x="1060" y="89" fill="#00ff0f"/><rect x="1070" y="89" fill="#00ff0d"/><rect x="1080" y="89" fill="#14ff0b"/><rect x="1090" y="89" fill="#30ff09"/><rect x="1100" y="89" fill="#4dff07"/><rect x="1110" y="89" fill="#6cff05"/><rect x="1120" y="89" fill="#8dff02"/><rect x="1130" y="89" fill="#b0ff00"/><rect x="1140" y="89" fill="#d6ff00"/><rect x="1150" y="89" fill="#feff00"/><rect x="1160" y="89" fill="#ffda00"/><rect x="1170" y="89" fill="#ffbd00"/><rect x="1180" y="89" fill="#ffa400"/><rect x="1190" y="89" fill="#ff9000"/><rect x="1200" y="89" fill="#ff7f00"/><rect x="1210" y="89" fill="#ff7100"/><rect x="1220" y="89" fill="#ff6400"/><rect x="1230" y="89" fill="#ff5900"/><rect x="1240" y="89" fill="#ff4f00"/><rect x="1250" y="89" fill="#ff4800"/><rect x="1260" y="89" fill="#ff4000"/><rect x="1270" y="89" fill="#ff3900"/><rect x="1280" y="89" fill="#ff3300"/><rect x="1050" y="97" fill="#00ff23"/><rect x="1060" y="97" fill="#00ff22"/><rect x="1070" y="97" fill="#00ff20"/><rect x="1080" y="97" fill="#11ff1f"/><rect x="1090" y="97" fill="#2dff1e"/><rect x="1100" y="97" fill="#4bff1c"/><rect x="1110" y="97" fill="#6bff1a"/><rect x="1120" y="97" fill="#8cff19"/><rect x="1130" y="97" fill="#b1ff17"/><rect x="1140" y="97" fill="#d7ff15"/><rect x="1150" y="97" fill="#fffd13"/><rect x="1160" y="97" fill="#ffd70e"/><rect x="1170" y="97" fill="#ffb90a"/><rect x="1180" y="97" fill="#ffa107"/><rect x="1190" y="97" fill="#ff8d05"/><rect x="1200" y="97" fill="#ff7c02"/><rect x="1210" y="97" fill="#ff6d01"/><rect x="1220" y="97" fill="#ff6100"/><rect x="1230" y="97" fill="#ff5600"/><rect x="1240" y="97" fill="#ff4c00"/><rect x="1250" y="97" fill="#ff4400"/><rect x="1260" y="97" fill="#ff3c00"/><rect x="1270" y="97" fill="#ff3600"/><rect x="1280" y="97" fill="#ff2f00"/><rect x="1290" y="97" fill="#ff2a00"/><rect x="1300" y="97" fill="#ff2500"/><rect x="1310" y="97" fill="#ff2000"/><rect x="1320" y="97" fill="#ff1d00"/><rect x="1330" y="97" fill="#ff1900"/><rect x="1340" y="97" fill="#ff1500"/><rect x="1350" y="97" fill="#ff1200"/><rect x="1360" y="97" fill="#ff0f00"/><rect x="1050" y="105" fill="#00ff36"/><rect x="1060" y="105" fill="#00ff35"/><rect x="1070" y="105" fill="#00ff35"/><rect x="1080" y="105" fill="#0eff34"/><rect x="1090" y="105" fill="#2bff33"/><rect x="1100" y="105" fill="#49ff32"/><rect x="1110" y="105" fill="#6aff31"/><rect x="1120" y="105" fill="#8cff30"/><rect x="1130" y="105" fill="#b2ff2f"/><rect x="1140" y="105" fill="#daff2e"/><rect x="1150" y="105" fill="#fff92c"/><rect x="1160" y="105" fill="#ffd424"/><rect x="1170" y="105" fill="#ffb61e"/><rect x="1180" y="105" fill="#ff9d19"/><rect x="1190" y="105" fill="#ff8915"/><rect x="1200" y="105" fill="#ff7912"/><rect x="1210" y="105" fill="#ff6a0f"/><rect x="1220" y="105" fill="#ff5e0c"/><rect x="1230" y="105" fill="#ff530a"/><rect x="1240" y="105" fill="#ff4a08"/><rect x="1250" y="105" fill="#ff4106"/><rect x="1260" y="105" fill="#ff3a05"/><rect x="1270" y="105" fill="#ff3303"/><rect x="1280" y="105" fill="#ff2d02"/><rect x="1290" y="105" fill="#ff2701"/><rect x="1300" y="105" fill="#ff2200"/><rect x="1310" y="105" fill="#ff1e00"/><rect x="1320" y="105" fill="#ff1a00"/><rect x="1330" y="105" fill="#ff1600"/><rect x="1340" y="105" fill="#ff1200"/><rect x="1350" y="105" fill="#ff0f00"/><rect x="1360" y="105" fill="#ff0c00"/><rect x="1370" y="105" fill="#ff0900"/><rect x="1380" y="105" fill="#ff0600"/><rect x="1390" y="105" fill="#ff0400"/><rect x="1400" y="105" fill="#ff0200"/><rect x="1410" y="105" fill="#ff0000"/><rect x="1420" y="105" fill="#ff0000"/><rect x="1430" y="105" fill="#ff0000"/><rect x="1440" y="105" fill="#ff0000"/><rect x="1050" y="113" fill="#00ff4a"/><rect x="1060" y="113" fill="#00ff4a"/><rect x="1070" y="113" fill="#00ff4a"/><rect x="1080" y="113" fill="#0bff4a"/><rect x="1090" y="113" fill="#28ff4a"/><rect x="1100" y="113" fill="#47ff4a"/><rect x="1110" y="113" fill="#69ff4a"/><rect x="1120" y="113" fill="#8cff49"/><rect x="1130" y="113" fill="#b2ff49"/><rect x="1140" y="113" fill="#dcff49"/><rect x="1150" y="113" fill="#fff646"/><rect x="1160" y="113" fill="#ffd03b"/><rect x="1170" y="113" fill="#ffb233"/><rect x="1180" y="113" fill="#ff9a2c"/><rect x="1190" y="113" fill="#ff8626"/><rect x="1200" y="113" fill="#ff7521"/><rect x="1210" y="113" fill="#ff671d"/><rect x="1220" y="113" fill="#ff5b19"/><rect x="1230" y="113" fill="#ff5016"/><rect x="1240" y="113" fill="#ff4714"/><rect x="1250" y="113" fill="#ff3e11"/><rect x="1260" y="113" fill="#ff370f"/><rect x="1270" y="113" fill="#ff300d"/><rect x="1280" y="113" fill="#ff2a0b"/><rect x="1290" y="113" fill="#ff250a"/><rect x="1300" y="113" fill="#ff2008"/><rect x="1310" y="113" fill="#ff1b07"/><rect x="1320" y="113" fill="#ff1706"/><rect x="1330" y="113" fill="#ff1405"/><rect x="1340" y="113" fill="#ff1004"/><rect x="1350" y="113" fill="#ff0d03"/><rect x="1360" y="113" fill="#ff0a02"/><rect x="1370" y="113" fill="#ff0701"/><rect x="1380" y="113" fill="#ff0400"/><rect x="1390" y="113" fill="#ff0200"/><rect x="1400" y="113" fill="#ff0000"/><rect x="1410" y="113" fill="#ff0000"/><rect x="1420" y="113" fill="#ff0000"/><rect x="1430" y="113" fill="#ff0000"/><rect x="1440" y="113" fill="#ff0000"/><rect x="1450" y="113" fill="#ff0000"/><rect x="1050" y="121" fill="#00ff5f"/><rect x="1060" y="121" fill="#00ff60"/><rect x="1070" y="121" fill="#00ff60"/><rect x="1080" y="121" fill="#08ff61"/><rect x="1090" y="121" fill="#25ff62"/><rect x="1100" y="121" fill="#45ff62"/><rect x="1110" y="121" fill="#67ff63"/><rect x="1120" y="121" fill="#8cff64"/><rect x="1130" y="121" fill="#b3ff65"/><rect x="1140" y="121" fill="#deff66"/><rect x="1150" y="121" fill="#fff262"/><rect x="1160" y="121" fill="#ffcc53"/><rect x="1170" y="121" fill="#ffae48"/><rect x="1180" y="121" fill="#ff963f"/><rect x="1190" y="121" fill="#ff8237"/><rect x="1200" y="121" fill="#ff7231"/><rect x="1210" y="121" fill="#ff642b"/><rect x="1220" y="121" fill="#ff5727"/><rect x="1230" y="121" fill="#ff4d23"/><rect x="1240" y="121" fill="#ff441f"/><rect x="1250" y="121" fill="#ff3b1c"/><rect x="1260" y="121" fill="#ff3419"/><rect x="1270" y="121" fill="#ff2e17"/><rect x="1280" y="121" fill="#ff2815"/><rect x="1290" y="121" fill="#ff2213"/><rect x="1300" y="121" fill="#ff1e11"/><rect x="1310" y="121" fill="#ff190f"/><rect x="1320" y="121" fill="#ff150e"/><rect x="1330" y="121" fill="#ff110c"/><rect x="1340" y="121" fill="#ff0e0b"/><rect x="1350" y="121" fill="#ff0b0a"/><rect x="1360" y="121" fill="#ff0809"/><rect x="1370" y="121" fill="#ff0508"/><rect x="1380" y="121" fill="#ff0207"/><rect x="1390" y="121" fill="#ff0006"/><rect x="1400" y="121" fill="#ff0005"/><rect x="1410" y="121" fill="#ff0004"/><rect x="1420" y="121" fill="#ff0003"/><rect x="1430" y="121" fill="#ff0002"/><rect x="1440" y="121" fill="#ff0002"/><rect x="1060" y="129" fill="#00ff76"/><rect x="1070" y="129" fill="#00ff78"/><rect x="1080" y="129" fill="#04ff79"/><rect x="1090" y="129" fill="#23ff7b"/><rect x="1100" y="129" fill="#43ff7c"/><rect x="1110" y="129" fill="#66ff7e"/><rect x="1120" y="129" fill="#8cff80"/><rect x="1130" y="129" fill="#b4ff82"/><rect x="1140" y="129" fill="#e0ff84"/><rect x="1150" y="129" fill="#ffef7e"/><rect x="1160" y="129" fill="#ffc86c"/><rect x="1170" y="129" fill="#ffaa5e"/><rect x="1180" y="129" fill="#ff9252"/><rect x="1190" y="129" fill="#ff7f49"/><rect x="1200" y="129" fill="#ff6e41"/><rect x="1210" y="129" fill="#ff603a"/><rect x="1220" y="129" fill="#ff5435"/><rect x="1230" y="129" fill="#ff4a30"/><rect x="1240" y="129" fill="#ff412b"/><rect x="1250" y="129" fill="#ff3928"/><rect x="1260" y="129" fill="#ff3124"/><rect x="1270" y="129" fill="#ff2b21"/><rect x="1280" y="129" fill="#ff251e"/><rect x="1290" y="129" fill="#ff201c"/><rect x="1300" y="129" fill="#ff1b1a"/><rect x="1310" y="129" fill="#ff1718"/><rect x="1320" y="129" fill="#ff1316"/><rect x="1330" y="129" fill="#ff0f14"/><rect x="1340" y="129" fill="#ff0c12"/><rect x="1350" y="129" fill="#ff0911"/><rect x="1360" y="129" fill="#ff060f"/><rect x="1370" y="129" fill="#ff030e"/><rect x="1380" y="129" fill="#ff000d"/><rect x="1390" y="129" fill="#ff000c"/><rect x="1400" y="129" fill="#ff000b"/><rect x="1410" y="129" fill="#ff000a"/><rect x="1420" y="129" fill="#ff0009"/><rect x="1430" y="129" fill="#ff0008"/><rect x="1060" y="137" fill="#00ff8e"/><rect x="1070" y="137" fill="#00ff90"/><rect x="1080" y="137" fill="#00ff93"/><rect x="1090" y="137" fill="#20ff95"/><rect x="1100" y="137" fill="#41ff98"/><rect x="1110" y="137" fill="#65ff9b"/><rect x="1120" y="137" fill="#8cff9e"/><rect x="1130" y="137" fill="#b6ffa1"/><rect x="1140" y="137" fill="#e3ffa5"/><rect x="1150" y="137" fill="#ffeb9b"/><rect x="1160" y="137" fill="#ffc485"/><rect x="1170" y="137" fill="#ffa774"/><rect x="1180" y="137" fill="#ff8f66"/><rect x="1190" y="137" fill="#ff7b5b"/><rect x="1200" y="137" fill="#ff6b51"/><rect x="1210" y="137" fill="#ff5d49"/><rect x="1220" y="137" fill="#ff5143"/><rect x="1230" y="137" fill="#ff473d"/><rect x="1240" y="137" fill="#ff3e37"/><rect x="1250" y="137" fill="#ff3633"/><rect x="1260" y="137" fill="#ff2f2f"/><rect x="1270" y="137" fill="#ff282b"/><rect x="1280" y="137" fill="#ff2328"/><rect x="1290" y="137" fill="#ff1d25"/><rect x="1300" y="137" fill="#ff1922"/><rect x="1310" y="137" fill="#ff1420"/><rect x="1320" y="137" fill="#ff111e"/><rect x="1330" y="137" fill="#ff0d1c"/><rect x="1340" y="137" fill="#ff0a1a"/><rect x="1350" y="137" fill="#ff0718"/><rect x="1360" y="137" fill="#ff0416"/><rect x="1370" y="137" fill="#ff0115"/><rect x="1380" y="137" fill="#ff0013"/><rect x="1390" y="137" fill="#ff0012"/><rect x="1400" y="137" fill="#ff0011"/><rect x="1410" y="137" fill="#ff000f"/><rect x="1420" y="137" fill="#ff000e"/><rect x="1060" y="145" fill="#00ffa7"/><rect x="1070" y="145" fill="#00ffaa"/><rect x="1080" y="145" fill="#00ffae"/><rect x="1090" y="145" fill="#1cffb1"/><rect x="1100" y="145" fill="#3fffb5"/><rect x="1110" y="145" fill="#63ffb9"/><rect x="1120" y="145" fill="#8bffbd"/><rect x="1130" y="145" fill="#b7ffc2"/><rect x="1140" y="145" fill="#e6ffc7"/><rect x="1150" y="145" fill="#ffe7ba"/><rect x="1160" y="145" fill="#ffc09f"/><rect x="1170" y="145" fill="#ffa28b"/><rect x="1180" y="145" fill="#ff8b7b"/><rect x="1190" y="145" fill="#ff776d"/><rect x="1200" y="145" fill="#ff6762"/><rect x="1210" y="145" fill="#ff5959"/><rect x="1220" y="145" fill="#ff4d51"/><rect x="1230" y="145" fill="#ff434a"/><rect x="1240" y="145" fill="#ff3a44"/><rect x="1250" y="145" fill="#ff333f"/><rect x="1260" y="145" fill="#ff2c3a"/><rect x="1270" y="145" fill="#ff2536"/><rect x="1280" y="145" fill="#ff2032"/><rect x="1290" y="145" fill="#ff1b2e"/><rect x="1300" y="145" fill="#ff162b"/><rect x="1310" y="145" fill="#ff1228"/><rect x="1320" y="145" fill="#ff0e26"/><rect x="1330" y="145" fill="#ff0b23"/><rect x="1340" y="145" fill="#ff0721"/><rect x="1350" y="145" fill="#ff041f"/><rect x="1360" y="145" fill="#ff021d"/><rect x="1370" y="145" fill="#ff001b"/><rect x="1380" y="145" fill="#ff001a"/><rect x="1390" y="145" fill="#ff0018"/><rect x="1400" y="145" fill="#ff0017"/><rect x="1410" y="145" fill="#ff0015"/><rect x="1060" y="153" fill="#00ffc2"/><rect x="1070" y="153" fill="#00ffc6"/><rect x="1080" y="153" fill="#00ffca"/><rect x="1090" y="153" fill="#19ffcf"/><rect x="1100" y="153" fill="#3cffd4"/><rect x="1110" y="153" fill="#62ffd9"/><rect x="1120" y="153" fill="#8bffdf"/><rect x="1130" y="153" fill="#b8ffe5"/><rect x="1140" y="153" fill="#e9ffec"/><rect x="1150" y="153" fill="#ffe3d9"/><rect x="1160" y="153" fill="#ffbcba"/><rect x="1170" y="153" fill="#ff9ea3"/><rect x="1180" y="153" fill="#ff8790"/><rect x="1190" y="153" fill="#ff7380"/><rect x="1200" y="153" fill="#ff6373"/><rect x="1210" y="153" fill="#ff5669"/><rect x="1220" y="153" fill="#ff4a5f"/><rect x="1230" y="153" fill="#ff4057"/><rect x="1240" y="153" fill="#ff3750"/><rect x="1250" y="153" fill="#ff304a"/><rect x="1260" y="153" fill="#ff2945"/><rect x="1270" y="153" fill="#ff2340"/><rect x="1280" y="153" fill="#ff1d3c"/><rect x="1290" y="153" fill="#ff1838"/><rect x="1300" y="153" fill="#ff1434"/><rect x="1310" y="153" fill="#ff1031"/><rect x="1320" y="153" fill="#ff0c2e"/><rect x="1330" y="153" fill="#ff082b"/><rect x="1340" y="153" fill="#ff0529"/><rect x="1350" y="153" fill="#ff0226"/><rect x="1360" y="153" fill="#ff0024"/><rect x="1370" y="153" fill="#ff0022"/><rect x="1380" y="153" fill="#ff0020"/><rect x="1390" y="153" fill="#ff001e"/><rect x="1400" y="153" fill="#ff001d"/><rect x="1060" y="161" fill="#00ffdd"/><rect x="1070" y="161" fill="#00ffe3"/><rect x="1080" y="161" fill="#00ffe8"/><rect x="1090" y="161" fill="#15ffee"/><rect x="1100" y="161" fill="#39fff4"/><rect x="1110" y="161" fill="#60fffb"/><rect x="1120" y="161" fill="#89fbff"/><rect x="1130" y="161" fill="#b1f3ff"/><rect x="1140" y="161" fill="#daebff"/><rect x="1150" y="161" fill="#ffdffa"/><rect x="1160" y="161" fill="#ffb8d6"/><rect x="1170" y="161" fill="#ff9abb"/><rect x="1180" y="161" fill="#ff82a5"/><rect x="1190" y="161" fill="#ff6f94"/><rect x="1200" y="161" fill="#ff5f85"/><rect x="1210" y="161" fill="#ff5279"/><rect x="1220" y="161" fill="#ff466e"/><rect x="1230" y="161" fill="#ff3d65"/><rect x="1240" y="161" fill="#ff345d"/><rect x="1250" y="161" fill="#ff2c56"/><rect x="1260" y="161" fill="#ff2650"/><rect x="1270" y="161" fill="#ff204b"/><rect x="1280" y="161" fill="#ff1a46"/><rect x="1290" y="161" fill="#ff1641"/><rect x="1300" y="161" fill="#ff113d"/><rect x="1310" y="161" fill="#ff0d39"/><rect x="1320" y="161" fill="#ff0a36"/><rect x="1330" y="161" fill="#ff0633"/><rect x="1340" y="161" fill="#ff0330"/><rect x="1350" y="161" fill="#ff002e"/><rect x="1360" y="161" fill="#ff002b"/><rect x="1370" y="161" fill="#ff0029"/><rect x="1380" y="161" fill="#ff0027"/><rect x="1390" y="161" fill="#ff0025"/><rect x="1070" y="169" fill="#00fdff"/><rect x="1080" y="169" fill="#00f6ff"/><rect x="1090" y="169" fill="#10f0ff"/><rect x="1100" y="169" fill="#32e9ff"/><rect x="1110" y="169" fill="#54e2ff"/><rect x="1120" y="169" fill="#77dbff"/><rect x="1130" y="169" fill="#9bd3ff"/><rect x="1140" y="169" fill="#bfccff"/><rect x="1150" y="169" fill="#e5c4ff"/><rect x="1160" y="169" fill="#ffb3f3"/><rect x="1170" y="169" fill="#ff96d4"/><rect x="1180" y="169" fill="#ff7ebb"/><rect x="1190" y="169" fill="#ff6ba7"/><rect x="1200" y="169" fill="#ff5b97"/><rect x="1210" y="169" fill="#ff4e89"/><rect x="1220" y="169" fill="#ff437d"/><rect x="1230" y="169" fill="#ff3973"/><rect x="1240" y="169" fill="#ff316a"/><rect x="1250" y="169" fill="#ff2962"/><rect x="1260" y="169" fill="#ff235c"/><rect x="1270" y="169" fill="#ff1d55"/><rect x="1280" y="169" fill="#ff1850"/><rect x="1290" y="169" fill="#ff134b"/><rect x="1300" y="169" fill="#ff0f46"/><rect x="1310" y="169" fill="#ff0b42"/><rect x="1320" y="169" fill="#ff073e"/><rect x="1330" y="169" fill="#ff043b"/><rect x="1340" y="169" fill="#ff0138"/><rect x="1350" y="169" fill="#ff0035"/><rect x="1360" y="169" fill="#ff0032"/><rect x="1370" y="169" fill="#ff0030"/><rect x="1380" y="169" fill="#ff002d"/><rect x="1070" y="177" fill="#00e1ff"/><rect x="1080" y="177" fill="#00daff"/><rect x="1090" y="177" fill="#0bd4ff"/><rect x="1100" y="177" fill="#29cdff"/><rect x="1110" y="177" fill="#48c7ff"/><rect x="1120" y="177" fill="#68c0ff"/><rect x="1130" y="177" fill="#89b9ff"/><rect x="1140" y="177" fill="#aab2ff"/><rect x="1150" y="177" fill="#cbaaff"/><rect x="1160" y="177" fill="#eea3ff"/><rect x="1170" y="177" fill="#ff91ee"/><rect x="1180" y="177" fill="#ff7ad2"/><rect x="1190" y="177" fill="#ff67bc"/><rect x="1200" y="177" fill="#ff57a9"/><rect x="1210" y="177" fill="#ff4a9a"/><rect x="1220" y="177" fill="#ff3f8d"/><rect x="1230" y="177" fill="#ff3681"/><rect x="1240" y="177" fill="#ff2d77"/><rect x="1250" y="177" fill="#ff266f"/><rect x="1260" y="177" fill="#ff2067"/><rect x="1270" y="177" fill="#ff1a60"/><rect x="1280" y="177" fill="#ff155a"/><rect x="1290" y="177" fill="#ff1055"/><rect x="1300" y="177" fill="#ff0c50"/><rect x="1310" y="177" fill="#ff084b"/><rect x="1320" y="177" fill="#ff0547"/><rect x="1330" y="177" fill="#ff0143"/><rect x="1340" y="177" fill="#ff0040"/><rect x="1350" y="177" fill="#ff003c"/><rect x="1360" y="177" fill="#ff0039"/><rect x="1370" y="177" fill="#ff0037"/><rect x="1070" y="185" fill="#00c9ff"/><rect x="1080" y="185" fill="#00c3ff"/><rect x="1090" y="185" fill="#07bdff"/><rect x="1100" y="185" fill="#22b6ff"/><rect x="1110" y="185" fill="#3fb0ff"/><rect x="1120" y="185" fill="#5caaff"/><rect x="1130" y="185" fill="#79a3ff"/><rect x="1140" y="185" fill="#989cff"/><rect x="1150" y="185" fill="#b695ff"/><rect x="1160" y="185" fill="#d68eff"/><rect x="1170" y="185" fill="#f687ff"/><rect x="1180" y="185" fill="#ff75ea"/><rect x="1190" y="185" fill="#ff63d1"/><rect x="1200" y="185" fill="#ff53bc"/><rect x="1210" y="185" fill="#ff46ab"/><rect x="1220" y="185" fill="#ff3c9c"/><rect x="1230" y="185" fill="#ff3290"/><rect x="1240" y="185" fill="#ff2a85"/><rect x="1250" y="185" fill="#ff237b"/><rect x="1260" y="185" fill="#ff1d73"/><rect x="1270" y="185" fill="#ff176b"/><rect x="1280" y="185" fill="#ff1265"/><rect x="1290" y="185" fill="#ff0d5f"/><rect x="1300" y="185" fill="#ff0959"/><rect x="1310" y="185" fill="#ff0654"/><rect x="1320" y="185" fill="#ff024f"/><rect x="1330" y="185" fill="#ff004b"/><rect x="1340" y="185" fill="#ff0047"/><rect x="1350" y="185" fill="#ff0044"/><rect x="1360" y="185" fill="#ff0041"/><rect x="1370" y="185" fill="#ff003d"/><rect x="1070" y="193" fill="#00b5ff"/><rect x="1080" y="193" fill="#00afff"/><rect x="1090" y="193" fill="#03a9ff"/><rect x="1100" y="193" fill="#1da3ff"/><rect x="1110" y="193" fill="#379dff"/><rect x="1120" y="193" fill="#5297ff"/><rect x="1130" y="193" fill="#6d90ff"/><rect x="1140" y="193" fill="#888aff"/><rect x="1150" y="193" fill="#a584ff"/><rect x="1160" y="193" fill="#c17dff"/><rect x="1170" y="193" fill="#df76ff"/><rect x="1180" y="193" fill="#fc6fff"/><rect x="1190" y="193" fill="#ff5ee6"/><rect x="1200" y="193" fill="#ff4fcf"/><rect x="1210" y="193" fill="#ff42bc"/><rect x="1220" y="193" fill="#ff38ac"/><rect x="1230" y="193" fill="#ff2f9e"/><rect x="1240" y="193" fill="#ff2793"/><rect x="1250" y="193" fill="#ff2088"/><rect x="1260" y="193" fill="#ff197f"/><rect x="1270" y="193" fill="#ff1477"/><rect x="1280" y="193" fill="#ff0f6f"/><rect x="1290" y="193" fill="#ff0b69"/><rect x="1300" y="193" fill="#ff0763"/><rect x="1310" y="193" fill="#ff035d"/><rect x="1320" y="193" fill="#ff0058"/><rect x="1330" y="193" fill="#ff0054"/><rect x="1340" y="193" fill="#ff004f"/><rect x="1350" y="193" fill="#ff004b"/><rect x="1360" y="193" fill="#ff0048"/><rect x="1070" y="201" fill="#00a3ff"/><rect x="1080" y="201" fill="#009dff"/><rect x="1090" y="201" fill="#0098ff"/><rect x="1100" y="201" fill="#1792ff"/><rect x="1110" y="201" fill="#308cff"/><rect x="1120" y="201" fill="#4987ff"/><rect x="1130" y="201" fill="#6281ff"/><rect x="1140" y="201" fill="#7b7bff"/><rect x="1150" y="201" fill="#9574ff"/><rect x="1160" y="201" fill="#b06eff"/><rect x="1170" y="201" fill="#cb68ff"/><rect x="1180" y="201" fill="#e661ff"/><rect x="1190" y="201" fill="#ff5afc"/><rect x="1200" y="201" fill="#ff4be3"/><rect x="1210" y="201" fill="#ff3ece"/><rect x="1220" y="201" fill="#ff34bd"/><rect x="1230" y="201" fill="#ff2bad"/><rect x="1240" y="201" fill="#ff23a0"/><rect x="1250" y="201" fill="#ff1c95"/><rect x="1260" y="201" fill="#ff168b"/><rect x="1270" y="201" fill="#ff1182"/><rect x="1280" y="201" fill="#ff0c7a"/><rect x="1290" y="201" fill="#ff0873"/><rect x="1300" y="201" fill="#ff046c"/><rect x="1310" y="201" fill="#ff0066"/><rect x="1320" y="201" fill="#ff0061"/><rect x="1330" y="201" fill="#ff005c"/><rect x="1340" y="201" fill="#ff0057"/><rect x="1350" y="201" fill="#ff0053"/><rect x="1080" y="209" fill="#008eff"/><rect x="1090" y="209" fill="#0089ff"/><rect x="1100" y="209" fill="#1384ff"/><rect x="1110" y="209" fill="#2a7eff"/><rect x="1120" y="209" fill="#4179ff"/><rect x="1130" y="209" fill="#5873ff"/><rect x="1140" y="209" fill="#706dff"/><rect x="1150" y="209" fill="#8867ff"/><rect x="1160" y="209" fill="#a161ff"/><rect x="1170" y="209" fill="#ba5bff"/><rect x="1180" y="209" fill="#d355ff"/><rect x="1190" y="209" fill="#ed4fff"/><rect x="1200" y="209" fill="#ff46f7"/><rect x="1210" y="209" fill="#ff3ae0"/><rect x="1220" y="209" fill="#ff30cd"/><rect x="1230" y="209" fill="#ff27bd"/><rect x="1240" y="209" fill="#ff20af"/><rect x="1250" y="209" fill="#ff19a2"/><rect x="1260" y="209" fill="#ff1397"/><rect x="1270" y="209" fill="#ff0e8d"/><rect x="1280" y="209" fill="#ff0985"/><rect x="1290" y="209" fill="#ff057d"/><rect x="1300" y="209" fill="#ff0176"/><rect x="1310" y="209" fill="#ff0070"/><rect x="1320" y="209" fill="#ff006a"/><rect x="1330" y="209" fill="#ff0064"/><rect x="1340" y="209" fill="#ff005f"/><rect x="1080" y="217" fill="#0081ff"/><rect x="1090" y="217" fill="#007cff"/><rect x="1100" y="217" fill="#0f77ff"/><rect x="1110" y="217" fill="#2472ff"/><rect x="1120" y="217" fill="#3a6cff"/><rect x="1130" y="217" fill="#5067ff"/><rect x="1140" y="217" fill="#6661ff"/><rect x="1150" y="217" fill="#7d5cff"/><rect x="1160" y="217" fill="#9456ff"/><rect x="1170" y="217" fill="#ab50ff"/><rect x="1180" y="217" fill="#c34bff"/><rect x="1190" y="217" fill="#db45ff"/><rect x="1200" y="217" fill="#f33fff"/><rect x="1210" y="217" fill="#ff36f3"/><rect x="1220" y="217" fill="#ff2cde"/><rect x="1230" y="217" fill="#ff23cc"/><rect x="1240" y="217" fill="#ff1cbd"/><rect x="1250" y="217" fill="#ff15b0"/><rect x="1260" y="217" fill="#ff10a4"/><rect x="1270" y="217" fill="#ff0b99"/><rect x="1280" y="217" fill="#ff0690"/><rect x="1290" y="217" fill="#ff0287"/><rect x="1300" y="217" fill="#ff0080"/><rect x="1310" y="217" fill="#ff0079"/><rect x="1320" y="217" fill="#ff0073"/><rect x="1330" y="217" fill="#ff006d"/><rect x="1080" y="225" fill="#0075ff"/><rect x="1090" y="225" fill="#0070ff"/><rect x="1100" y="225" fill="#0c6cff"/><rect x="1110" y="225" fill="#2066ff"/><rect x="1120" y="225" fill="#3461ff"/><rect x="1130" y="225" fill="#495cff"/><rect x="1140" y="225" fill="#5e57ff"/><rect x="1150" y="225" fill="#7352ff"/><rect x="1160" y="225" fill="#884cff"/><rect x="1170" y="225" fill="#9e47ff"/><rect x="1180" y="225" fill="#b441ff"/><rect x="1190" y="225" fill="#ca3cff"/><rect x="1200" y="225" fill="#e136ff"/><rect x="1210" y="225" fill="#f830ff"/><rect x="1220" y="225" fill="#ff28ef"/><rect x="1230" y="225" fill="#ff1fdc"/><rect x="1240" y="225" fill="#ff18cc"/><rect x="1250" y="225" fill="#ff12bd"/><rect x="1260" y="225" fill="#ff0cb0"/><rect x="1270" y="225" fill="#ff08a5"/><rect x="1280" y="225" fill="#ff039b"/><rect x="1290" y="225" fill="#ff0092"/><rect x="1300" y="225" fill="#ff008a"/><rect x="1310" y="225" fill="#ff0082"/><rect x="1320" y="225" fill="#ff007c"/><rect x="1080" y="233" fill="#006bff"/><rect x="1090" y="233" fill="#0066ff"/><rect x="1100" y="233" fill="#0961ff"/><rect x="1110" y="233" fill="#1c5dff"/><rect x="1120" y="233" fill="#2f58ff"/><rect x="1130" y="233" fill="#4253ff"/><rect x="1140" y="233" fill="#564eff"/><rect x="1150" y="233" fill="#6a49ff"/><rect x="1160" y="233" fill="#7e44ff"/><rect x="1170" y="233" fill="#923eff"/><rect x="1180" y="233" fill="#a739ff"/><rect x="1190" y="233" fill="#bc34ff"/><rect x="1200" y="233" fill="#d12eff"/><rect x="1210" y="233" fill="#e729ff"/><rect x="1220" y="233" fill="#fd23ff"/><rect x="1230" y="233" fill="#ff1bec"/><rect x="1240" y="233" fill="#ff14da"/><rect x="1250" y="233" fill="#ff0ecb"/><rect x="1260" y="233" fill="#ff09bd"/><rect x="1270" y="233" fill="#ff04b1"/><rect x="1280" y="233" fill="#ff00a6"/><rect x="1290" y="233" fill="#ff009d"/><rect x="1300" y="233" fill="#ff0094"/><rect x="1310" y="233" fill="#ff008c"/><rect x="1080" y="241" fill="#0061ff"/><rect x="1090" y="241" fill="#005dff"/><rect x="1100" y="241" fill="#0658ff"/><rect x="1110" y="241" fill="#1854ff"/><rect x="1120" y="241" fill="#2a4fff"/><rect x="1130" y="241" fill="#3c4aff"/><rect x="1140" y="241" fill="#4f46ff"/><rect x="1150" y="241" fill="#6241ff"/><rect x="1160" y="241" fill="#753cff"/><rect x="1170" y="241" fill="#8837ff"/><rect x="1180" y="241" fill="#9c32ff"/><rect x="1190" y="241" fill="#af2dff"/><rect x="1200" y="241" fill="#c327ff"/><rect x="1210" y="241" fill="#d822ff"/><rect x="1220" y="241" fill="#ec1dff"/><rect x="1230" y="241" fill="#ff17fd"/><rect x="1240" y="241" fill="#ff11ea"/><rect x="1250" y="241" fill="#ff0bd9"/><rect x="1260" y="241" fill="#ff06ca"/><rect x="1270" y="241" fill="#ff01bd"/><rect x="1280" y="241" fill="#ff00b2"/><rect x="1290" y="241" fill="#ff00a7"/><rect x="1300" y="241" fill="#ff009e"/><rect x="1080" y="249" fill="#0059ff"/><rect x="1090" y="249" fill="#0055ff"/><rect x="1100" y="249" fill="#0350ff"/><rect x="1110" y="249" fill="#144cff"/><rect x="1120" y="249" fill="#2647ff"/><rect x="1130" y="249" fill="#3743ff"/><rect x="1140" y="249" fill="#493eff"/><rect x="1150" y="249" fill="#5b39ff"/><rect x="1160" y="249" fill="#6d35ff"/><rect x="1170" y="249" fill="#7f30ff"/><rect x="1180" y="249" fill="#912bff"/><rect x="1190" y="249" fill="#a426ff"/><rect x="1200" y="249" fill="#b721ff"/><rect x="1210" y="249" fill="#ca1cff"/><rect x="1220" y="249" fill="#de17ff"/><rect x="1230" y="249" fill="#f112ff"/><rect x="1240" y="249" fill="#ff0df9"/><rect x="1250" y="249" fill="#ff07e7"/><rect x="1260" y="249" fill="#ff02d8"/><rect x="1270" y="249" fill="#ff00ca"/><rect x="1280" y="249" fill="#ff00bd"/><rect x="1290" y="249" fill="#ff00b2"/><rect x="1090" y="257" fill="#004dff"/><rect x="1100" y="257" fill="#0149ff"/><rect x="1110" y="257" fill="#1145ff"/><rect x="1120" y="257" fill="#2240ff"/><rect x="1130" y="257" fill="#323cff"/><rect x="1140" y="257" fill="#4337ff"/><rect x="1150" y="257" fill="#5433ff"/><rect x="1160" y="257" fill="#652eff"/><rect x="1170" y="257" fill="#762aff"/><rect x="1180" y="257" fill="#8825ff"/><rect x="1190" y="257" fill="#9a21ff"/><rect x="1200" y="257" fill="#ac1cff"/><rect x="1210" y="257" fill="#be17ff"/><rect x="1220" y="257" fill="#d012ff"/><rect x="1230" y="257" fill="#e30dff"/><rect x="1240" y="257" fill="#f608ff"/><rect x="1250" y="257" fill="#ff03f6"/><rect x="1260" y="257" fill="#ff00e5"/><rect x="1270" y="257" fill="#ff00d6"/><rect x="1280" y="257" fill="#ff00c9"/><rect x="1090" y="265" fill="#0046ff"/><rect x="1100" y="265" fill="#0042ff"/><rect x="1110" y="265" fill="#0f3eff"/><rect x="1120" y="265" fill="#1e3aff"/><rect x="1130" y="265" fill="#2e36ff"/><rect x="1140" y="265" fill="#3e31ff"/><rect x="1150" y="265" fill="#4e2dff"/><rect x="1160" y="265" fill="#5e29ff"/><rect x="1170" y="265" fill="#6f24ff"/><rect x="1180" y="265" fill="#8020ff"/><rect x="1190" y="265" fill="#901bff"/><rect x="1200" y="265" fill="#a117ff"/><rect x="1210" y="265" fill="#b312ff"/><rect x="1220" y="265" fill="#c40eff"/><rect x="1230" y="265" fill="#d609ff"/><rect x="1240" y="265" fill="#e804ff"/><rect x="1250" y="265" fill="#fa00ff"/><rect x="1260" y="265" fill="#ff00f3"/><rect x="1270" y="265" fill="#ff00e3"/><rect x="1090" y="273" fill="#0040ff"/><rect x="1100" y="273" fill="#003cff"/><rect x="1110" y="273" fill="#0c38ff"/><rect x="1120" y="273" fill="#1b34ff"/><rect x="1130" y="273" fill="#2a30ff"/><rect x="1140" y="273" fill="#392cff"/><rect x="1150" y="273" fill="#4928ff"/><rect x="1160" y="273" fill="#5824ff"/><rect x="1170" y="273" fill="#681fff"/><rect x="1180" y="273" fill="#781bff"/><rect x="1190" y="273" fill="#8817ff"/><rect x="1200" y="273" fill="#9812ff"/><rect x="1210" y="273" fill="#a90eff"/><rect x="1220" y="273" fill="#b90aff"/><rect x="1230" y="273" fill="#ca05ff"/><rect x="1240" y="273" fill="#db01ff"/><rect x="1250" y="273" fill="#ec00ff"/><rect x="1260" y="273" fill="#fd00ff"/><rect x="1270" y="273" fill="#ff00f0"/><rect x="1090" y="281" fill="#003aff"/><rect x="1100" y="281" fill="#0036ff"/><rect x="1110" y="281" fill="#0a32ff"/><rect x="1120" y="281" fill="#182fff"/><rect x="1130" y="281" fill="#262bff"/><rect x="1140" y="281" fill="#3527ff"/><rect x="1150" y="281" fill="#4423ff"/><rect x="1160" y="281" fill="#531fff"/><rect x="1170" y="281" fill="#621bff"/><rect x="1180" y="281" fill="#7117ff"/><rect x="1190" y="281" fill="#8012ff"/><rect x="1200" y="281" fill="#900eff"/><rect x="1210" y="281" fill="#9f0aff"/><rect x="1220" y="281" fill="#af06ff"/><rect x="1230" y="281" fill="#bf01ff"/><rect x="1240" y="281" fill="#cf00ff"/><rect x="1250" y="281" fill="#e000ff"/><rect x="1260" y="281" fill="#f000ff"/><rect x="1090" y="289" fill="#0035ff"/><rect x="1100" y="289" fill="#0031ff"/><rect x="1110" y="289" fill="#082dff"/><rect x="1120" y="289" fill="#152aff"/><rect x="1130" y="289" fill="#2326ff"/><rect x="1140" y="289" fill="#3122ff"/><rect x="1150" y="289" fill="#3f1eff"/><rect x="1160" y="289" fill="#4e1aff"/><rect x="1170" y="289" fill="#5c16ff"/><rect x="1180" y="289" fill="#6a12ff"/><rect x="1190" y="289" fill="#790eff"/><rect x="1200" y="289" fill="#880aff"/><rect x="1210" y="289" fill="#9706ff"/><rect x="1220" y="289" fill="#a602ff"/><rect x="1230" y="289" fill="#b500ff"/><rect x="1240" y="289" fill="#c500ff"/><rect x="1250" y="289" fill="#d400ff"/><rect x="1100" y="297" fill="#002cff"/><rect x="1110" y="297" fill="#0629ff"/><rect x="1120" y="297" fill="#1325ff"/><rect x="1130" y="297" fill="#2021ff"/><rect x="1140" y="297" fill="#2e1eff"/><rect x="1150" y="297" fill="#3b1aff"/><rect x="1160" y="297" fill="#4916ff"/><rect x="1170" y="297" fill="#5713ff"/><rect x="1180" y="297" fill="#640fff"/><rect x="1190" y="297" fill="#730bff"/><rect x="1200" y="297" fill="#8107ff"/><rect x="1210" y="297" fill="#8f03ff"/><rect x="1220" y="297" fill="#9e00ff"/><rect x="1230" y="297" fill="#ac00ff"/><rect x="1240" y="297" fill="#bb00ff"/><rect x="1100" y="305" fill="#0028ff"/><rect x="1110" y="305" fill="#0424ff"/><rect x="1120" y="305" fill="#1021ff"/><rect x="1130" y="305" fill="#1d1dff"/><rect x="1140" y="305" fill="#2a1aff"/><rect x="1150" y="305" fill="#3716ff"/><rect x="1160" y="305" fill="#4413ff"/><rect x="1170" y="305" fill="#520fff"/><rect x="1180" y="305" fill="#5f0bff"/><rect x="1190" y="305" fill="#6d07ff"/><rect x="1200" y="305" fill="#7a04ff"/><rect x="1210" y="305" fill="#8800ff"/><rect x="1220" y="305" fill="#9600ff"/><rect x="1230" y="305" fill="#a400ff"/><rect x="1100" y="313" fill="#0024ff"/><rect x="1110" y="313" fill="#0220ff"/><rect x="1120" y="313" fill="#0e1dff"/><rect x="1130" y="313" fill="#1b1aff"/><rect x="1140" y="313" fill="#2716ff"/><rect x="1150" y="313" fill="#3413ff"/><rect x="1160" y="313" fill="#400fff"/><rect x="1170" y="313" fill="#4d0cff"/><rect x="1180" y="313" fill="#5a08ff"/><rect x="1190" y="313" fill="#6704ff"/><rect x="1200" y="313" fill="#7401ff"/><rect x="1210" y="313" fill="#8100ff"/><rect x="1220" y="313" fill="#8f00ff"/><rect x="1100" y="321" fill="#0020ff"/><rect x="1110" y="321" fill="#001dff"/><rect x="1120" y="321" fill="#0c19ff"/><rect x="1130" y="321" fill="#1816ff"/><rect x="1140" y="321" fill="#2413ff"/><rect x="1150" y="321" fill="#300fff"/><rect x="1160" y="321" fill="#3c0cff"/><rect x="1170" y="321" fill="#4908ff"/><rect x="1180" y="321" fill="#5505ff"/><rect x="1190" y="321" fill="#6201ff"/><rect x="1200" y="321" fill="#6e00ff"/><rect x="1210" y="321" fill="#7b00ff"/><rect x="1100" y="329" fill="#001cff"/><rect x="1110" y="329" fill="#0019ff"/><rect x="1120" y="329" fill="#0a16ff"/><rect x="1130" y="329" fill="#1613ff"/><rect x="1140" y="329" fill="#220fff"/><rect x="1150" y="329" fill="#2d0cff"/><rect x="1160" y="329" fill="#3909ff"/><rect x="1170" y="329" fill="#4506ff"/><rect x="1180" y="329" fill="#5102ff"/><rect x="1190" y="329" fill="#5d00ff"/><rect x="1200" y="329" fill="#6900ff"/><rect x="1110" y="337" fill="#0016ff"/><rect x="1120" y="337" fill="#0913ff"/><rect x="1130" y="337" fill="#1410ff"/><rect x="1140" y="337" fill="#1f0cff"/><rect x="1150" y="337" fill="#2a09ff"/><rect x="1160" y="337" fill="#3606ff"/><rect x="1170" y="337" fill="#4103ff"/><rect x="1180" y="337" fill="#4d00ff"/><rect x="1190" y="337" fill="#5800ff"/><rect x="1110" y="345" fill="#0013ff"/><rect x="1120" y="345" fill="#0710ff"/><rect x="1130" y="345" fill="#120dff"/><rect x="1140" y="345" fill="#1d0aff"/><rect x="1150" y="345" fill="#2806ff"/><rect x="1160" y="345" fill="#3303ff"/><rect x="1170" y="345" fill="#3e00ff"/><rect x="1180" y="345" fill="#4900ff"/><rect x="1110" y="353" fill="#0010ff"/><rect x="1120" y="353" fill="#050dff"/><rect x="1130" y="353" fill="#100aff"/><rect x="1140" y="353" fill="#1a07ff"/><rect x="1150" y="353" fill="#2504ff"/><rect x="1160" y="353" fill="#3001ff"/><rect x="1170" y="353" fill="#3a00ff"/><rect x="1180" y="353" fill="#4500ff"/><rect x="1110" y="361" fill="#000dff"/><rect x="1120" y="361" fill="#040aff"/><rect x="1130" y="361" fill="#0e07ff"/><rect x="1140" y="361" fill="#1804ff"/><rect x="1150" y="361" fill="#2302ff"/><rect x="1160" y="361" fill="#2d00ff"/><rect x="1170" y="361" fill="#3700ff"/><rect x="1110" y="369" fill="#000bff"/><rect x="1120" y="369" fill="#0308ff"/><rect x="1130" y="369" fill="#0c05ff"/><rect x="1140" y="369" fill="#1602ff"/><rect x="1150" y="369" fill="#2000ff"/><rect x="1160" y="369" fill="#2a00ff"/><rect x="1120" y="377" fill="#0105ff"/><rect x="1130" y="377" fill="#0b03ff"/><rect x="1140" y="377" fill="#1400ff"/><rect x="1150" y="377" fill="#1e00ff"/><rect x="1120" y="385" fill="#0003ff"/><rect x="1130" y="385" fill="#0900ff"/><rect x="1140" y="385" fill="#1300ff"/><rect x="1120" y="393" fill="#0001ff"/><rect x="1130" y="393" fill="#0800ff"/><rect x="1120" y="401" fill="#0000ff"/></g></g></g><rect x="951.5" y="58.5" width="600.3" height="461.9" fill="none" stroke="#a8a8a8" stroke-width="1.2"/><line x1="945.5" y1="521.0" x2="951.5" y2="521.0" stroke="#a8a8a8" stroke-width="1.2"/><text x="945.2" y="526.4" font-size="13.5" fill="#d0d0d0" text-anchor="end">0</text><line x1="945.5" y1="482.5" x2="951.5" y2="482.5" stroke="#a8a8a8" stroke-width="1.2"/><text x="945.2" y="487.9" font-size="13.5" fill="#d0d0d0" text-anchor="end">0,05</text><line x1="945.5" y1="443.9" x2="951.5" y2="443.9" stroke="#a8a8a8" stroke-width="1.2"/><text x="945.2" y="449.3" font-size="13.5" fill="#d0d0d0" text-anchor="end">0,1</text><line x1="945.5" y1="405.4" x2="951.5" y2="405.4" stroke="#a8a8a8" stroke-width="1.2"/><text x="945.2" y="410.8" font-size="13.5" fill="#d0d0d0" text-anchor="end">0,15</text><line x1="945.5" y1="366.9" x2="951.5" y2="366.9" stroke="#a8a8a8" stroke-width="1.2"/><text x="945.2" y="372.3" font-size="13.5" fill="#d0d0d0" text-anchor="end">0,2</text><line x1="945.5" y1="328.4" x2="951.5" y2="328.4" stroke="#a8a8a8" stroke-width="1.2"/><text x="945.2" y="333.8" font-size="13.5" fill="#d0d0d0" text-anchor="end">0,25</text><line x1="945.5" y1="289.8" x2="951.5" y2="289.8" stroke="#a8a8a8" stroke-width="1.2"/><text x="945.2" y="295.2" font-size="13.5" fill="#d0d0d0" text-anchor="end">0,3</text><line x1="945.5" y1="251.3" x2="951.5" y2="251.3" stroke="#a8a8a8" stroke-width="1.2"/><text x="945.2" y="256.7" font-size="13.5" fill="#d0d0d0" text-anchor="end">0,35</text><line x1="945.5" y1="212.8" x2="951.5" y2="212.8" stroke="#a8a8a8" stroke-width="1.2"/><text x="945.2" y="218.2" font-size="13.5" fill="#d0d0d0" text-anchor="end">0,4</text><line x1="945.5" y1="174.3" x2="951.5" y2="174.3" stroke="#a8a8a8" stroke-width="1.2"/><text x="945.2" y="179.7" font-size="13.5" fill="#d0d0d0" text-anchor="end">0,45</text><line x1="945.5" y1="135.8" x2="951.5" y2="135.8" stroke="#a8a8a8" stroke-width="1.2"/><text x="945.2" y="141.2" font-size="13.5" fill="#d0d0d0" text-anchor="end">0,5</text><line x1="945.5" y1="97.2" x2="951.5" y2="97.2" stroke="#a8a8a8" stroke-width="1.2"/><text x="945.2" y="102.6" font-size="13.5" fill="#d0d0d0" text-anchor="end">0,55</text><line x1="951.5" y1="520.4" x2="951.5" y2="525.4" stroke="#a8a8a8" stroke-width="1.2"/><text x="951.5" y="541.0" font-size="13.0" fill="#d0d0d0" text-anchor="middle">0</text><line x1="1001.4" y1="520.4" x2="1001.4" y2="525.4" stroke="#a8a8a8" stroke-width="1.2"/><text x="1001.4" y="541.0" font-size="13.0" fill="#d0d0d0" text-anchor="middle">0,05</text><line x1="1051.3" y1="520.4" x2="1051.3" y2="525.4" stroke="#a8a8a8" stroke-width="1.2"/><text x="1051.3" y="541.0" font-size="13.0" fill="#d0d0d0" text-anchor="middle">0,1</text><line x1="1101.2" y1="520.4" x2="1101.2" y2="525.4" stroke="#a8a8a8" stroke-width="1.2"/><text x="1101.2" y="541.0" font-size="13.0" fill="#d0d0d0" text-anchor="middle">0,15</text><line x1="1151.1" y1="520.4" x2="1151.1" y2="525.4" stroke="#a8a8a8" stroke-width="1.2"/><text x="1151.1" y="541.0" font-size="13.0" fill="#d0d0d0" text-anchor="middle">0,2</text><line x1="1201.0" y1="520.4" x2="1201.0" y2="525.4" stroke="#a8a8a8" stroke-width="1.2"/><text x="1201.0" y="541.0" font-size="13.0" fill="#d0d0d0" text-anchor="middle">0,25</text><line x1="1250.9" y1="520.4" x2="1250.9" y2="525.4" stroke="#a8a8a8" stroke-width="1.2"/><text x="1250.9" y="541.0" font-size="13.0" fill="#d0d0d0" text-anchor="middle">0,3</text><line x1="1300.8" y1="520.4" x2="1300.8" y2="525.4" stroke="#a8a8a8" stroke-width="1.2"/><text x="1300.8" y="541.0" font-size="13.0" fill="#d0d0d0" text-anchor="middle">0,35</text><line x1="1350.7" y1="520.4" x2="1350.7" y2="525.4" stroke="#a8a8a8" stroke-width="1.2"/><text x="1350.7" y="541.0" font-size="13.0" fill="#d0d0d0" text-anchor="middle">0,4</text><line x1="1400.6" y1="520.4" x2="1400.6" y2="525.4" stroke="#a8a8a8" stroke-width="1.2"/><text x="1400.6" y="541.0" font-size="13.0" fill="#d0d0d0" text-anchor="middle">0,45</text><line x1="1450.5" y1="520.4" x2="1450.5" y2="525.4" stroke="#a8a8a8" stroke-width="1.2"/><text x="1450.5" y="541.0" font-size="13.0" fill="#d0d0d0" text-anchor="middle">0,5</text><line x1="1500.4" y1="520.4" x2="1500.4" y2="525.4" stroke="#a8a8a8" stroke-width="1.2"/><text x="1500.4" y="541.0" font-size="13.0" fill="#d0d0d0" text-anchor="middle">0,55</text><rect x="1042.9" y="68.0" width="13.6" height="13.6" fill="none" stroke="#f4f4f4" stroke-width="1.4"/><rect x="1149.0" y="77.9" width="13.6" height="13.6" fill="none" stroke="#f4f4f4" stroke-width="1.4"/><rect x="1127.1" y="92.0" width="13.6" height="13.6" fill="none" stroke="#f4f4f4" stroke-width="1.4"/><rect x="1093.2" y="101.1" width="13.6" height="13.6" fill="none" stroke="#f4f4f4" stroke-width="1.4"/><rect x="1125.2" y="113.7" width="13.6" height="13.6" fill="none" stroke="#f4f4f4" stroke-width="1.4"/><rect x="1099.1" y="146.9" width="13.6" height="13.6" fill="none" stroke="#f4f4f4" stroke-width="1.4"/><rect x="1065.2" y="164.0" width="13.6" height="13.6" fill="none" stroke="#f4f4f4" stroke-width="1.4"/><rect x="1118.2" y="188.9" width="13.6" height="13.6" fill="none" stroke="#f4f4f4" stroke-width="1.4"/><rect x="1137.2" y="193.2" width="13.6" height="13.6" fill="none" stroke="#f4f4f4" stroke-width="1.4"/><rect x="1080.0" y="195.8" width="13.6" height="13.6" fill="none" stroke="#f4f4f4" stroke-width="1.4"/><rect x="1170.8" y="213.7" width="13.6" height="13.6" fill="none" stroke="#f4f4f4" stroke-width="1.4"/><rect x="1120.0" y="242.1" width="13.6" height="13.6" fill="none" stroke="#f4f4f4" stroke-width="1.4"/><rect x="1122.0" y="292.7" width="13.6" height="13.6" fill="none" stroke="#f4f4f4" stroke-width="1.4"/><rect x="1232.7" y="186.7" width="13.6" height="13.6" fill="none" stroke="#f4f4f4" stroke-width="1.4"/><rect x="1326.1" y="126.8" width="13.6" height="13.6" fill="none" stroke="#f4f4f4" stroke-width="1.4"/><rect x="1269.1" y="259.4" width="13.6" height="13.6" fill="none" stroke="#f4f4f4" stroke-width="1.4"/><rect x="1120.0" y="390.5" width="13.6" height="13.6" fill="none" stroke="#f4f4f4" stroke-width="1.4"/><rect x="1173.2" y="90.8" width="13.6" height="13.6" fill="none" stroke="#f4f4f4" stroke-width="1.4"/><rect x="1199.2" y="95.9" width="13.6" height="13.6" fill="none" stroke="#f4f4f4" stroke-width="1.4"/><rect x="1224.2" y="107.1" width="13.6" height="13.6" fill="none" stroke="#f4f4f4" stroke-width="1.4"/><rect x="1243.2" y="100.6" width="13.6" height="13.6" fill="none" stroke="#f4f4f4" stroke-width="1.4"/><rect x="1249.7" y="102.9" width="13.6" height="13.6" fill="none" stroke="#f4f4f4" stroke-width="1.4"/><rect x="1237.2" y="113.1" width="13.6" height="13.6" fill="none" stroke="#f4f4f4" stroke-width="1.4"/><rect x="1212.6" y="107.5" width="13.6" height="13.6" fill="none" stroke="#f4f4f4" stroke-width="1.4"/><rect x="1194.5" y="115.0" width="13.6" height="13.6" fill="none" stroke="#f4f4f4" stroke-width="1.4"/><rect x="1190.3" y="123.3" width="13.6" height="13.6" fill="none" stroke="#f4f4f4" stroke-width="1.4"/><rect x="1194.5" y="128.9" width="13.6" height="13.6" fill="none" stroke="#f4f4f4" stroke-width="1.4"/><rect x="1176.9" y="126.1" width="13.6" height="13.6" fill="none" stroke="#f4f4f4" stroke-width="1.4"/><rect x="1176.9" y="135.4" width="13.6" height="13.6" fill="none" stroke="#f4f4f4" stroke-width="1.4"/><rect x="1257.1" y="140.9" width="13.6" height="13.6" fill="none" stroke="#f4f4f4" stroke-width="1.4"/><rect x="1213.5" y="119.6" width="13.6" height="13.6" fill="none" stroke="#f4f4f4" stroke-width="1.4"/><rect x="1207.0" y="123.3" width="13.6" height="13.6" fill="none" stroke="#f4f4f4" stroke-width="1.4"/><rect x="1141.2" y="151.9" width="13.4" height="13.4" fill="none" stroke="#000" stroke-width="2.6"/><circle cx="1037.5" cy="72.4" r="4.4" fill="#20e020" stroke="#111" stroke-width="1.1"/><circle cx="1158.6" cy="85.2" r="4.4" fill="#f0e020" stroke="#111" stroke-width="1.1"/><circle cx="1134.5" cy="99.4" r="4.4" fill="#a8b070" stroke="#111" stroke-width="1.1"/><circle cx="1094.5" cy="107.3" r="4.4" fill="#6a7a58" stroke="#111" stroke-width="1.1"/><circle cx="1130.6" cy="119.2" r="4.4" fill="#505a40" stroke="#111" stroke-width="1.1"/><circle cx="1099.4" cy="154.3" r="4.4" fill="#90a8a0" stroke="#111" stroke-width="1.1"/><circle cx="1058.6" cy="170.4" r="4.4" fill="#40f0f0" stroke="#111" stroke-width="1.1"/><circle cx="1154.2" cy="161.6" r="4.4" fill="#000" stroke="#111" stroke-width="1.1"/><circle cx="1148.3" cy="158.2" r="4.4" fill="#a0a0a0" stroke="#111" stroke-width="1.1"/><circle cx="1120.3" cy="197.4" r="4.4" fill="#607090" stroke="#111" stroke-width="1.1"/><circle cx="1143.4" cy="201.4" r="4.4" fill="#7878a0" stroke="#111" stroke-width="1.1"/><circle cx="1074.4" cy="205.3" r="4.4" fill="#3a7090" stroke="#111" stroke-width="1.1"/><circle cx="1177.9" cy="221.1" r="4.4" fill="#503868" stroke="#111" stroke-width="1.1"/><circle cx="1118.3" cy="252.0" r="4.4" fill="#4a5a98" stroke="#111" stroke-width="1.1"/><circle cx="1245.7" cy="192.1" r="4.4" fill="#b07090" stroke="#111" stroke-width="1.1"/><circle cx="1447.0" cy="114.6" r="4.4" fill="#e02020" stroke="#111" stroke-width="1.1"/><circle cx="1344.6" cy="131.2" r="4.4" fill="#a05048" stroke="#111" stroke-width="1.1"/><circle cx="1282.3" cy="262.3" r="4.4" fill="#d040d0" stroke="#111" stroke-width="1.1"/><circle cx="1121.0" cy="308.6" r="4.4" fill="#3a4070" stroke="#111" stroke-width="1.1"/><circle cx="1113.6" cy="414.3" r="4.4" fill="#1010e0" stroke="#111" stroke-width="1.1"/><circle cx="1186.4" cy="96.2" r="4.4" fill="#d8b060" stroke="#111" stroke-width="1.1"/><circle cx="1212.4" cy="101.3" r="4.4" fill="#d0a058" stroke="#111" stroke-width="1.1"/><circle cx="1227.5" cy="113.9" r="4.4" fill="#7a5a40" stroke="#111" stroke-width="1.1"/><circle cx="1241.7" cy="113.4" r="4.4" fill="#6a4a30" stroke="#111" stroke-width="1.1"/><circle cx="1259.3" cy="107.4" r="4.4" fill="#b08050" stroke="#111" stroke-width="1.1"/><circle cx="1265.8" cy="108.3" r="4.4" fill="#8a6040" stroke="#111" stroke-width="1.1"/><circle cx="1254.6" cy="115.7" r="4.4" fill="#5a3a28" stroke="#111" stroke-width="1.1"/><circle cx="1206.9" cy="120.8" r="4.4" fill="#b08a70" stroke="#111" stroke-width="1.1"/><circle cx="1201.3" cy="128.7" r="4.4" fill="#a88068" stroke="#111" stroke-width="1.1"/><circle cx="1213.8" cy="127.3" r="4.4" fill="#b08a70" stroke="#111" stroke-width="1.1"/><circle cx="1208.3" cy="128.3" r="4.4" fill="#a88068" stroke="#111" stroke-width="1.1"/><circle cx="1219.4" cy="128.3" r="4.4" fill="#c09078" stroke="#111" stroke-width="1.1"/><circle cx="1231.9" cy="123.1" r="4.4" fill="#c09070" stroke="#111" stroke-width="1.1"/><circle cx="1226.3" cy="122.2" r="4.4" fill="#c89878" stroke="#111" stroke-width="1.1"/><circle cx="1230.1" cy="127.8" r="4.4" fill="#e0a888" stroke="#111" stroke-width="1.1"/><circle cx="1206.9" cy="135.7" r="4.4" fill="#5a4030" stroke="#111" stroke-width="1.1"/><circle cx="1189.7" cy="141.2" r="4.4" fill="#d8b098" stroke="#111" stroke-width="1.1"/><circle cx="1187.4" cy="140.3" r="4.4" fill="#e8c0a8" stroke="#111" stroke-width="1.1"/><circle cx="1186.4" cy="131.0" r="4.4" fill="#e8c8b0" stroke="#111" stroke-width="1.1"/><circle cx="1274.6" cy="145.4" r="4.4" fill="#b07070" stroke="#111" stroke-width="1.1"/><rect x="1440.6" y="108.2" width="12.8" height="12.8" fill="none" stroke="#f4f4f4" stroke-width="1.4"/><defs><linearGradient id="gIns" x1="0" y1="0" x2="1" y2="1"><stop offset="0" stop-color="#ff8a30"/><stop offset="1" stop-color="#ff4a28"/></linearGradient></defs><rect x="1359.3" y="358.2" width="186.2" height="122.2" fill="url(#gIns)" stroke="#7a7a7a" stroke-width="2"/><svg x="1360.3" y="359.2" width="184.2" height="120.2" overflow="hidden"><g transform="translate(-1360.3,-359.2)"><rect x="1375.4" y="385.3" width="13.6" height="13.6" fill="none" stroke="#f8e8e0" stroke-width="1.5"/><rect x="1493.5" y="371.4" width="13.6" height="13.6" fill="none" stroke="#f8e8e0" stroke-width="1.5"/><rect x="1445.0" y="412.7" width="13.6" height="13.6" fill="none" stroke="#f8e8e0" stroke-width="1.5"/><rect x="1458.1" y="426.2" width="13.6" height="13.6" fill="none" stroke="#f8e8e0" stroke-width="1.5"/><rect x="1369.5" y="431.7" width="13.6" height="13.6" fill="none" stroke="#f8e8e0" stroke-width="1.5"/><rect x="1378.3" y="444.4" width="13.6" height="13.6" fill="none" stroke="#f8e8e0" stroke-width="1.5"/><rect x="1431.1" y="444.4" width="13.6" height="13.6" fill="none" stroke="#f8e8e0" stroke-width="1.5"/><circle cx="1417.3" cy="393.5" r="4.2" fill="#c08a68" stroke="#222" stroke-width="1.1"/><circle cx="1544.3" cy="376.2" r="4.2" fill="#c08a68" stroke="#222" stroke-width="1.1"/><circle cx="1363.7" cy="441.6" r="4.2" fill="#c09070" stroke="#222" stroke-width="1.1"/><circle cx="1373.0" cy="437.0" r="4.2" fill="#c8906a" stroke="#222" stroke-width="1.1"/><circle cx="1386.5" cy="436.5" r="4.2" fill="#e0a888" stroke="#222" stroke-width="1.1"/><circle cx="1413.5" cy="436.5" r="4.2" fill="#c08a68" stroke="#222" stroke-width="1.1"/><circle cx="1423.2" cy="450.5" r="4.2" fill="#b07858" stroke="#222" stroke-width="1.1"/><circle cx="1476.4" cy="452.2" r="4.2" fill="#e8b898" stroke="#222" stroke-width="1.1"/><circle cx="1488.2" cy="420.1" r="4.2" fill="#c89070" stroke="#222" stroke-width="1.1"/><circle cx="1501.3" cy="433.2" r="4.2" fill="#b88060" stroke="#222" stroke-width="1.1"/></g></svg><rect x="1312" y="489.9" width="235.4" height="24.3" fill="#2a2a2a"/><text x="1312.5" y="510.0" font-size="19.5" fill="#f0f0f0" textLength="219.5" lengthAdjust="spacingAndGlyphs">RGB Triplet: 207, 143, 102</text><text x="44.3" y="583.9" font-size="28.5" fill="#f0f0f0" textLength="217.5" lengthAdjust="spacingAndGlyphs" stroke="#f0f0f0" stroke-width="0.55">Avg dE2000: 1,59</text><text x="48.8" y="621.9" font-size="28.5" fill="#f0f0f0" textLength="209.4" lengthAdjust="spacingAndGlyphs" stroke="#f0f0f0" stroke-width="0.55">Max dE2000: 3,5</text><text x="11.0" y="666.5" font-size="27.0" fill="#f0f0f0" textLength="203.5" lengthAdjust="spacingAndGlyphs" stroke="#f0f0f0" stroke-width="0.5">Current Reading</text><text x="9.9" y="699.6" font-size="21.5" fill="#f0f0f0" textLength="96.2" lengthAdjust="spacingAndGlyphs" stroke="#f0f0f0" stroke-width="0.4">x: 0,4591</text><text x="156.4" y="699.6" font-size="21.5" fill="#f0f0f0" textLength="97.2" lengthAdjust="spacingAndGlyphs" stroke="#f0f0f0" stroke-width="0.4">y: 0,3836</text><text x="10.5" y="737.8" font-size="22.0" fill="#f0f0f0" textLength="76.7" lengthAdjust="spacingAndGlyphs" stroke="#f0f0f0" stroke-width="0.4">fL: 41,5</text><text x="10.4" y="769.5" font-size="22.0" fill="#f0f0f0" textLength="135.3" lengthAdjust="spacingAndGlyphs" stroke="#f0f0f0" stroke-width="0.4">cd/m²: 142,2</text><rect x="297" y="566" width="1262" height="213" fill="#111"/><defs><linearGradient id="gHdr" x1="0" y1="0" x2="0" y2="1"><stop offset="0" stop-color="#303030"/><stop offset="0.5" stop-color="#2e2e2e"/><stop offset="0.54" stop-color="#151515"/><stop offset="1" stop-color="#141414"/></linearGradient></defs><rect x="298.2" y="567.2" width="1262" height="23.8" fill="url(#gHdr)"/><rect x="298.2" y="591.0" width="1262" height="21.8" fill="#414141"/><rect x="298.2" y="612.8" width="1262" height="21.8" fill="#7f7f7f"/><rect x="298.2" y="634.6" width="1262" height="22.0" fill="#414141"/><rect x="298.2" y="656.6" width="1262" height="21.8" fill="#7f7f7f"/><rect x="298.2" y="678.4" width="1262" height="21.8" fill="#414141"/><rect x="298.2" y="700.2" width="1262" height="21.8" fill="#7f7f7f"/><rect x="298.2" y="722.0" width="1262" height="21.8" fill="#414141"/><rect x="298.2" y="743.8" width="1262" height="21.7" fill="#7f7f7f"/><text x="312.6" y="607.0" font-size="14.2" fill="#f2f2f2" textLength="66.6" lengthAdjust="spacingAndGlyphs" font-weight="bold">x: CIE31</text><text x="312.6" y="628.8" font-size="14.2" fill="#ececec" textLength="66.6" lengthAdjust="spacingAndGlyphs" font-weight="bold">y: CIE31</text><text x="312.6" y="650.6" font-size="14.2" fill="#f2f2f2" textLength="10.6" lengthAdjust="spacingAndGlyphs" font-weight="bold">Y</text><text x="312.6" y="672.6" font-size="14.2" fill="#ececec" textLength="121.5" lengthAdjust="spacingAndGlyphs" font-weight="bold">Target x:CIE31</text><text x="312.6" y="694.4" font-size="14.2" fill="#f2f2f2" textLength="121.5" lengthAdjust="spacingAndGlyphs" font-weight="bold">Target y:CIE31</text><text x="312.6" y="716.2" font-size="14.2" fill="#ececec" textLength="70.2" lengthAdjust="spacingAndGlyphs" font-weight="bold">Target Y</text><text x="312.6" y="738.0" font-size="14.2" fill="#f2f2f2" textLength="69.3" lengthAdjust="spacingAndGlyphs" font-weight="bold">ΔE 2000</text><text x="312.6" y="759.8" font-size="14.2" fill="#ececec" textLength="54.9" lengthAdjust="spacingAndGlyphs" font-weight="bold">ΔE ITP</text><svg x="297.9" y="566" width="1259.1" height="200" overflow="hidden"><g transform="translate(-297.9,-566)"><text x="490.5" y="584.0" font-size="12.9" fill="#f0f0f0" textLength="44.0" lengthAdjust="spacingAndGlyphs" text-anchor="middle" stroke="#f0f0f0" stroke-width="0.3">White</text><text x="453.8" y="607.0" font-size="14.3" fill="#f2f2f2" letter-spacing="1.9" stroke="#f2f2f2" stroke-width="0.35">0,3127</text><text x="453.8" y="628.8" font-size="14.3" fill="#e8e8e8" letter-spacing="1.9" stroke="#e8e8e8" stroke-width="0.35">0,3290</text><text x="453.8" y="650.6" font-size="14.3" fill="#f2f2f2" letter-spacing="1.9" stroke="#f2f2f2" stroke-width="0.35">396,3709</text><text x="453.8" y="672.6" font-size="14.3" fill="#e8e8e8" letter-spacing="1.9" stroke="#e8e8e8" stroke-width="0.35">0,3127</text><text x="453.8" y="694.4" font-size="14.3" fill="#f2f2f2" letter-spacing="1.9" stroke="#f2f2f2" stroke-width="0.35">0,3290</text><text x="453.8" y="716.2" font-size="14.3" fill="#e8e8e8" letter-spacing="1.9" stroke="#e8e8e8" stroke-width="0.35">396,3709</text><text x="453.8" y="738.0" font-size="14.3" fill="#f2f2f2" letter-spacing="1.9" stroke="#f2f2f2" stroke-width="0.35">0,0217</text><text x="453.8" y="759.8" font-size="14.3" fill="#e8e8e8" letter-spacing="1.9" stroke="#e8e8e8" stroke-width="0.35">0,0225</text><text x="573.0" y="584.0" font-size="12.9" fill="#f0f0f0" textLength="56.6" lengthAdjust="spacingAndGlyphs" text-anchor="middle" stroke="#f0f0f0" stroke-width="0.3">Gray 80</text><text x="536.9" y="607.0" font-size="14.3" fill="#f2f2f2" letter-spacing="1.9" stroke="#f2f2f2" stroke-width="0.35">0,3135</text><text x="536.9" y="628.8" font-size="14.3" fill="#e8e8e8" letter-spacing="1.9" stroke="#e8e8e8" stroke-width="0.35">0,3299</text><text x="536.9" y="650.6" font-size="14.3" fill="#f2f2f2" letter-spacing="1.9" stroke="#f2f2f2" stroke-width="0.35">314,7141</text><text x="536.9" y="672.6" font-size="14.3" fill="#e8e8e8" letter-spacing="1.9" stroke="#e8e8e8" stroke-width="0.35">0,3127</text><text x="536.9" y="694.4" font-size="14.3" fill="#f2f2f2" letter-spacing="1.9" stroke="#f2f2f2" stroke-width="0.35">0,3290</text><text x="536.9" y="716.2" font-size="14.3" fill="#e8e8e8" letter-spacing="1.9" stroke="#e8e8e8" stroke-width="0.35">315,9031</text><text x="536.9" y="738.0" font-size="14.3" fill="#f2f2f2" letter-spacing="1.9" stroke="#f2f2f2" stroke-width="0.35">0,4468</text><text x="536.9" y="759.8" font-size="14.3" fill="#e8e8e8" letter-spacing="1.9" stroke="#e8e8e8" stroke-width="0.35">0,5622</text><text x="655.5" y="584.0" font-size="12.9" fill="#f0f0f0" textLength="55.8" lengthAdjust="spacingAndGlyphs" text-anchor="middle" stroke="#f0f0f0" stroke-width="0.3">Gray 65</text><text x="619.2" y="607.0" font-size="14.3" fill="#f2f2f2" letter-spacing="1.9" stroke="#f2f2f2" stroke-width="0.35">0,3130</text><text x="619.2" y="628.8" font-size="14.3" fill="#e8e8e8" letter-spacing="1.9" stroke="#e8e8e8" stroke-width="0.35">0,3301</text><text x="619.2" y="650.6" font-size="14.3" fill="#f2f2f2" letter-spacing="1.9" stroke="#f2f2f2" stroke-width="0.35">254,4334</text><text x="619.2" y="672.6" font-size="14.3" fill="#e8e8e8" letter-spacing="1.9" stroke="#e8e8e8" stroke-width="0.35">0,3127</text><text x="619.2" y="694.4" font-size="14.3" fill="#f2f2f2" letter-spacing="1.9" stroke="#f2f2f2" stroke-width="0.35">0,3290</text><text x="619.2" y="716.2" font-size="14.3" fill="#e8e8e8" letter-spacing="1.9" stroke="#e8e8e8" stroke-width="0.35">255,9245</text><text x="619.2" y="738.0" font-size="14.3" fill="#f2f2f2" letter-spacing="1.9" stroke="#f2f2f2" stroke-width="0.35">0,6818</text><text x="619.2" y="759.8" font-size="14.3" fill="#e8e8e8" letter-spacing="1.9" stroke="#e8e8e8" stroke-width="0.35">0,6539</text><text x="738.0" y="584.0" font-size="12.9" fill="#f0f0f0" textLength="56.0" lengthAdjust="spacingAndGlyphs" text-anchor="middle" stroke="#f0f0f0" stroke-width="0.3">Gray 50</text><text x="702.1" y="607.0" font-size="14.3" fill="#f2f2f2" letter-spacing="1.9" stroke="#f2f2f2" stroke-width="0.35">0,3137</text><text x="702.1" y="628.8" font-size="14.3" fill="#e8e8e8" letter-spacing="1.9" stroke="#e8e8e8" stroke-width="0.35">0,3303</text><text x="702.1" y="650.6" font-size="14.3" fill="#f2f2f2" letter-spacing="1.9" stroke="#f2f2f2" stroke-width="0.35">197,0102</text><text x="702.1" y="672.6" font-size="14.3" fill="#e8e8e8" letter-spacing="1.9" stroke="#e8e8e8" stroke-width="0.35">0,3127</text><text x="702.1" y="694.4" font-size="14.3" fill="#f2f2f2" letter-spacing="1.9" stroke="#f2f2f2" stroke-width="0.35">0,3290</text><text x="702.1" y="716.2" font-size="14.3" fill="#e8e8e8" letter-spacing="1.9" stroke="#e8e8e8" stroke-width="0.35">198,0458</text><text x="702.1" y="738.0" font-size="14.3" fill="#f2f2f2" letter-spacing="1.9" stroke="#f2f2f2" stroke-width="0.35">0,5493</text><text x="702.1" y="759.8" font-size="14.3" fill="#e8e8e8" letter-spacing="1.9" stroke="#e8e8e8" stroke-width="0.35">0,7472</text><text x="820.5" y="584.0" font-size="12.9" fill="#f0f0f0" textLength="56.0" lengthAdjust="spacingAndGlyphs" text-anchor="middle" stroke="#f0f0f0" stroke-width="0.3">Gray 35</text><text x="784.4" y="607.0" font-size="14.3" fill="#f2f2f2" letter-spacing="1.9" stroke="#f2f2f2" stroke-width="0.35">0,3134</text><text x="784.4" y="628.8" font-size="14.3" fill="#e8e8e8" letter-spacing="1.9" stroke="#e8e8e8" stroke-width="0.35">0,3305</text><text x="784.4" y="650.6" font-size="14.3" fill="#f2f2f2" letter-spacing="1.9" stroke="#f2f2f2" stroke-width="0.35">137,1892</text><text x="784.4" y="672.6" font-size="14.3" fill="#e8e8e8" letter-spacing="1.9" stroke="#e8e8e8" stroke-width="0.35">0,3127</text><text x="784.4" y="694.4" font-size="14.3" fill="#f2f2f2" letter-spacing="1.9" stroke="#f2f2f2" stroke-width="0.35">0,3290</text><text x="784.4" y="716.2" font-size="14.3" fill="#e8e8e8" letter-spacing="1.9" stroke="#e8e8e8" stroke-width="0.35">138,3416</text><text x="784.4" y="738.0" font-size="14.3" fill="#f2f2f2" letter-spacing="1.9" stroke="#f2f2f2" stroke-width="0.35">0,6478</text><text x="784.4" y="759.8" font-size="14.3" fill="#e8e8e8" letter-spacing="1.9" stroke="#e8e8e8" stroke-width="0.35">0,8701</text><text x="894.5" y="584.0" font-size="12.9" fill="#f0f0f0" textLength="40.0" lengthAdjust="spacingAndGlyphs" text-anchor="middle" stroke="#f0f0f0" stroke-width="0.3">Black</text><text x="866.7" y="607.0" font-size="14.3" fill="#f2f2f2" letter-spacing="1.9" stroke="#f2f2f2" stroke-width="0.35">0,3186</text><text x="866.7" y="628.8" font-size="14.3" fill="#e8e8e8" letter-spacing="1.9" stroke="#e8e8e8" stroke-width="0.35">0,3197</text><text x="866.7" y="650.6" font-size="14.3" fill="#f2f2f2" letter-spacing="1.9" stroke="#f2f2f2" stroke-width="0.35">0,0154</text><text x="866.7" y="672.6" font-size="14.3" fill="#e8e8e8" letter-spacing="1.9" stroke="#e8e8e8" stroke-width="0.35">0,3127</text><text x="866.7" y="694.4" font-size="14.3" fill="#f2f2f2" letter-spacing="1.9" stroke="#f2f2f2" stroke-width="0.35">0,3290</text><text x="866.7" y="716.2" font-size="14.3" fill="#e8e8e8" letter-spacing="1.9" stroke="#e8e8e8" stroke-width="0.35">0,0154</text><text x="866.7" y="738.0" font-size="14.3" fill="#f2f2f2" letter-spacing="1.9" stroke="#f2f2f2" stroke-width="0.35">0,0112</text><text x="866.7" y="759.8" font-size="14.3" fill="#e8e8e8" letter-spacing="1.9" stroke="#e8e8e8" stroke-width="0.35">0,9290</text><text x="964.2" y="584.0" font-size="12.9" fill="#f0f0f0" textLength="68.3" lengthAdjust="spacingAndGlyphs" text-anchor="middle" stroke="#f0f0f0" stroke-width="0.3">Dark Skin</text><text x="930.0" y="607.0" font-size="14.3" fill="#f2f2f2" letter-spacing="1.9" stroke="#f2f2f2" stroke-width="0.35">0,4153</text><text x="930.0" y="628.8" font-size="14.3" fill="#e8e8e8" letter-spacing="1.9" stroke="#e8e8e8" stroke-width="0.35">0,3610</text><text x="930.0" y="650.6" font-size="14.3" fill="#f2f2f2" letter-spacing="1.9" stroke="#f2f2f2" stroke-width="0.35">39,2205</text><text x="930.0" y="672.6" font-size="14.3" fill="#e8e8e8" letter-spacing="1.9" stroke="#e8e8e8" stroke-width="0.35">0,4064</text><text x="930.0" y="694.4" font-size="14.3" fill="#f2f2f2" letter-spacing="1.9" stroke="#f2f2f2" stroke-width="0.35">0,3615</text><text x="930.0" y="716.2" font-size="14.3" fill="#e8e8e8" letter-spacing="1.9" stroke="#e8e8e8" stroke-width="0.35">38,6886</text><text x="930.0" y="738.0" font-size="14.3" fill="#f2f2f2" letter-spacing="1.9" stroke="#f2f2f2" stroke-width="0.35">1,4025</text><text x="930.0" y="759.8" font-size="14.3" fill="#e8e8e8" letter-spacing="1.9" stroke="#e8e8e8" stroke-width="0.35">5,2286</text><text x="1045.2" y="584.0" font-size="12.9" fill="#f0f0f0" textLength="69.6" lengthAdjust="spacingAndGlyphs" text-anchor="middle" stroke="#f0f0f0" stroke-width="0.3">Light Skin</text><text x="1009.1" y="607.0" font-size="14.3" fill="#f2f2f2" letter-spacing="1.9" stroke="#f2f2f2" stroke-width="0.35">0,3853</text><text x="1009.1" y="628.8" font-size="14.3" fill="#e8e8e8" letter-spacing="1.9" stroke="#e8e8e8" stroke-width="0.35">0,3538</text><text x="1009.1" y="650.6" font-size="14.3" fill="#f2f2f2" letter-spacing="1.9" stroke="#f2f2f2" stroke-width="0.35">140,2168</text><text x="1009.1" y="672.6" font-size="14.3" fill="#e8e8e8" letter-spacing="1.9" stroke="#e8e8e8" stroke-width="0.35">0,3787</text><text x="1009.1" y="694.4" font-size="14.3" fill="#f2f2f2" letter-spacing="1.9" stroke="#f2f2f2" stroke-width="0.35">0,3539</text><text x="1009.1" y="716.2" font-size="14.3" fill="#e8e8e8" letter-spacing="1.9" stroke="#e8e8e8" stroke-width="0.35">138,2228</text><text x="1009.1" y="738.0" font-size="14.3" fill="#f2f2f2" letter-spacing="1.9" stroke="#f2f2f2" stroke-width="0.35">1,5440</text><text x="1009.1" y="759.8" font-size="14.3" fill="#e8e8e8" letter-spacing="1.9" stroke="#e8e8e8" stroke-width="0.35">4,3170</text><text x="1123.0" y="584.0" font-size="12.9" fill="#f0f0f0" textLength="61.7" lengthAdjust="spacingAndGlyphs" text-anchor="middle" stroke="#f0f0f0" stroke-width="0.3">Blue Sky</text><text x="1091.7" y="607.0" font-size="14.3" fill="#f2f2f2" letter-spacing="1.9" stroke="#f2f2f2" stroke-width="0.35">0,2415</text><text x="1091.7" y="628.8" font-size="14.3" fill="#e8e8e8" letter-spacing="1.9" stroke="#e8e8e8" stroke-width="0.35">0,2650</text><text x="1091.7" y="650.6" font-size="14.3" fill="#f2f2f2" letter-spacing="1.9" stroke="#f2f2f2" stroke-width="0.35">73,9790</text><text x="1091.7" y="672.6" font-size="14.3" fill="#e8e8e8" letter-spacing="1.9" stroke="#e8e8e8" stroke-width="0.35">0,2478</text><text x="1091.7" y="694.4" font-size="14.3" fill="#f2f2f2" letter-spacing="1.9" stroke="#f2f2f2" stroke-width="0.35">0,2664</text><text x="1091.7" y="716.2" font-size="14.3" fill="#e8e8e8" letter-spacing="1.9" stroke="#e8e8e8" stroke-width="0.35">75,7476</text><text x="1091.7" y="738.0" font-size="14.3" fill="#f2f2f2" letter-spacing="1.9" stroke="#f2f2f2" stroke-width="0.35">1,9868</text><text x="1091.7" y="759.8" font-size="14.3" fill="#e8e8e8" letter-spacing="1.9" stroke="#e8e8e8" stroke-width="0.35">4,9468</text><text x="1195.2" y="584.0" font-size="12.9" fill="#f0f0f0" textLength="52.2" lengthAdjust="spacingAndGlyphs" text-anchor="middle" stroke="#f0f0f0" stroke-width="0.3">Foliage</text><text x="1163.9" y="607.0" font-size="14.3" fill="#f2f2f2" letter-spacing="1.9" stroke="#f2f2f2" stroke-width="0.35">0,3393</text><text x="1163.9" y="628.8" font-size="14.3" fill="#e8e8e8" letter-spacing="1.9" stroke="#e8e8e8" stroke-width="0.35">0,4380</text><text x="1163.9" y="650.6" font-size="14.3" fill="#f2f2f2" letter-spacing="1.9" stroke="#f2f2f2" stroke-width="0.35">52,3335</text><text x="1163.9" y="672.6" font-size="14.3" fill="#e8e8e8" letter-spacing="1.9" stroke="#e8e8e8" stroke-width="0.35">0,3388</text><text x="1163.9" y="694.4" font-size="14.3" fill="#f2f2f2" letter-spacing="1.9" stroke="#f2f2f2" stroke-width="0.35">0,4328</text><text x="1163.9" y="716.2" font-size="14.3" fill="#e8e8e8" letter-spacing="1.9" stroke="#e8e8e8" stroke-width="0.35">52,1505</text><text x="1163.9" y="738.0" font-size="14.3" fill="#f2f2f2" letter-spacing="1.9" stroke="#f2f2f2" stroke-width="0.35">0,5991</text><text x="1163.9" y="759.8" font-size="14.3" fill="#e8e8e8" letter-spacing="1.9" stroke="#e8e8e8" stroke-width="0.35">1,9406</text><text x="1280.0" y="584.0" font-size="12.9" fill="#f0f0f0" textLength="87.0" lengthAdjust="spacingAndGlyphs" text-anchor="middle" stroke="#f0f0f0" stroke-width="0.3">Blue Flower</text><text x="1236.5" y="607.0" font-size="14.3" fill="#f2f2f2" letter-spacing="1.9" stroke="#f2f2f2" stroke-width="0.35">0,2645</text><text x="1236.5" y="628.8" font-size="14.3" fill="#e8e8e8" letter-spacing="1.9" stroke="#e8e8e8" stroke-width="0.35">0,2534</text><text x="1236.5" y="650.6" font-size="14.3" fill="#f2f2f2" letter-spacing="1.9" stroke="#f2f2f2" stroke-width="0.35">91,7248</text><text x="1236.5" y="672.6" font-size="14.3" fill="#e8e8e8" letter-spacing="1.9" stroke="#e8e8e8" stroke-width="0.35">0,2673</text><text x="1236.5" y="694.4" font-size="14.3" fill="#f2f2f2" letter-spacing="1.9" stroke="#f2f2f2" stroke-width="0.35">0,2539</text><text x="1236.5" y="716.2" font-size="14.3" fill="#e8e8e8" letter-spacing="1.9" stroke="#e8e8e8" stroke-width="0.35">93,2177</text><text x="1236.5" y="738.0" font-size="14.3" fill="#f2f2f2" letter-spacing="1.9" stroke="#f2f2f2" stroke-width="0.35">0,9773</text><text x="1236.5" y="759.8" font-size="14.3" fill="#e8e8e8" letter-spacing="1.9" stroke="#e8e8e8" stroke-width="0.35">2,4332</text><text x="1381.0" y="584.0" font-size="12.9" fill="#f0f0f0" textLength="93.5" lengthAdjust="spacingAndGlyphs" text-anchor="middle" stroke="#f0f0f0" stroke-width="0.3">Bluish Green</text><text x="1334.3" y="607.0" font-size="14.3" fill="#f2f2f2" letter-spacing="1.9" stroke="#f2f2f2" stroke-width="0.35">0,2527</text><text x="1334.3" y="628.8" font-size="14.3" fill="#e8e8e8" letter-spacing="1.9" stroke="#e8e8e8" stroke-width="0.35">0,3580</text><text x="1334.3" y="650.6" font-size="14.3" fill="#f2f2f2" letter-spacing="1.9" stroke="#f2f2f2" stroke-width="0.35">164,2887</text><text x="1334.3" y="672.6" font-size="14.3" fill="#e8e8e8" letter-spacing="1.9" stroke="#e8e8e8" stroke-width="0.35">0,2613</text><text x="1334.3" y="694.4" font-size="14.3" fill="#f2f2f2" letter-spacing="1.9" stroke="#f2f2f2" stroke-width="0.35">0,3558</text><text x="1334.3" y="716.2" font-size="14.3" fill="#e8e8e8" letter-spacing="1.9" stroke="#e8e8e8" stroke-width="0.35">167,9856</text><text x="1334.3" y="738.0" font-size="14.3" fill="#f2f2f2" letter-spacing="1.9" stroke="#f2f2f2" stroke-width="0.35">1,8368</text><text x="1334.3" y="759.8" font-size="14.3" fill="#e8e8e8" letter-spacing="1.9" stroke="#e8e8e8" stroke-width="0.35">6,0838</text><text x="1474.2" y="584.0" font-size="12.9" fill="#f0f0f0" textLength="53.5" lengthAdjust="spacingAndGlyphs" text-anchor="middle" stroke="#f0f0f0" stroke-width="0.3">Orange</text><text x="1437.8" y="607.0" font-size="14.3" fill="#f2f2f2" letter-spacing="1.9" stroke="#f2f2f2" stroke-width="0.35">0,5258</text><text x="1437.8" y="628.8" font-size="14.3" fill="#e8e8e8" letter-spacing="1.9" stroke="#e8e8e8" stroke-width="0.35">0,4068</text><text x="1437.8" y="650.6" font-size="14.3" fill="#f2f2f2" letter-spacing="1.9" stroke="#f2f2f2" stroke-width="0.35">118,6888</text><text x="1437.8" y="672.6" font-size="14.3" fill="#e8e8e8" letter-spacing="1.9" stroke="#e8e8e8" stroke-width="0.35">0,5140</text><text x="1437.8" y="694.4" font-size="14.3" fill="#f2f2f2" letter-spacing="1.9" stroke="#f2f2f2" stroke-width="0.35">0,4089</text><text x="1437.8" y="716.2" font-size="14.3" fill="#e8e8e8" letter-spacing="1.9" stroke="#e8e8e8" stroke-width="0.35">114,0871</text><text x="1437.8" y="738.0" font-size="14.3" fill="#f2f2f2" letter-spacing="1.9" stroke="#f2f2f2" stroke-width="0.35">1,7788</text><text x="1437.8" y="759.8" font-size="14.3" fill="#e8e8e8" letter-spacing="1.9" stroke="#e8e8e8" stroke-width="0.35">8,8144</text><text x="1545.0" y="584.0" font-size="12.9" fill="#f0f0f0" textLength="50.0" lengthAdjust="spacingAndGlyphs" text-anchor="middle" stroke="#f0f0f0" stroke-width="0.3">Purple</text><text x="1520.0" y="607.0" font-size="14.3" fill="#f2f2f2" letter-spacing="1.9" stroke="#f2f2f2" stroke-width="0.35">0,2030</text><text x="1520.0" y="628.8" font-size="14.3" fill="#e8e8e8" letter-spacing="1.9" stroke="#e8e8e8" stroke-width="0.35">0,1860</text><text x="1520.0" y="650.6" font-size="14.3" fill="#f2f2f2" letter-spacing="1.9" stroke="#f2f2f2" stroke-width="0.35">44,0500</text><text x="1520.0" y="672.6" font-size="14.3" fill="#e8e8e8" letter-spacing="1.9" stroke="#e8e8e8" stroke-width="0.35">0,2120</text><text x="1520.0" y="694.4" font-size="14.3" fill="#f2f2f2" letter-spacing="1.9" stroke="#f2f2f2" stroke-width="0.35">0,1890</text><text x="1520.0" y="716.2" font-size="14.3" fill="#e8e8e8" letter-spacing="1.9" stroke="#e8e8e8" stroke-width="0.35">46,4400</text><text x="1520.0" y="738.0" font-size="14.3" fill="#f2f2f2" letter-spacing="1.9" stroke="#f2f2f2" stroke-width="0.35">2,5600</text><text x="1520.0" y="759.8" font-size="14.3" fill="#e8e8e8" letter-spacing="1.9" stroke="#e8e8e8" stroke-width="0.35">9,7900</text></g></svg><rect x="298.2" y="765.5" width="1262" height="13.5" fill="#3c3c3c"/><rect x="299.5" y="767" width="13" height="10.5" rx="2" fill="#5c5c5c"/><path d="M302.5,772 L308,768.5 L308,775.5 Z" fill="#2a2a2a"/><rect x="318.5" y="767" width="369.5" height="10" rx="5" fill="#4e4e4e"/><rect x="1543" y="766.5" width="13" height="11.5" rx="2" fill="#5a5a5a"/><defs><linearGradient id="gBtn" x1="0" y1="0" x2="0" y2="1"><stop offset="0" stop-color="#b0b0b0"/><stop offset="0.45" stop-color="#9c9c9c"/><stop offset="1" stop-color="#6c6c6c"/></linearGradient><linearGradient id="gCtl" x1="0" y1="0" x2="0" y2="1"><stop offset="0" stop-color="#b4b4b4"/><stop offset="1" stop-color="#7e7e7e"/></linearGradient><linearGradient id="gCirc" x1="0" y1="0" x2="0" y2="1"><stop offset="0" stop-color="#7c7c7c"/><stop offset="1" stop-color="#b4b4b4"/></linearGradient><linearGradient id="gCircD" x1="0" y1="0" x2="0" y2="1"><stop offset="0" stop-color="#2c2c2c"/><stop offset="1" stop-color="#4a4a4a"/></linearGradient></defs><rect x="-10.3" y="803" width="1.6" height="48.5" fill="#262626"/><rect x="-12.0" y="849.3" width="5" height="2.2" fill="#262626"/><rect x="-8.4" y="803" width="50.2" height="48.5" rx="3" fill="url(#gBtn)"/><rect x="-3.2" y="807.8" width="40.2" height="24" rx="2.8" fill="#2a84a6"/><text x="16.6" y="846.6" font-size="10.8" fill="#262626" text-anchor="middle">Cyan</text><rect x="41.8" y="803" width="1.6" height="48.5" fill="#262626"/><rect x="40.1" y="849.3" width="5" height="2.2" fill="#262626"/><rect x="43.7" y="803" width="50.2" height="48.5" rx="3" fill="url(#gBtn)"/><rect x="48.9" y="807.8" width="40.2" height="24" rx="2.8" fill="#ff0000"/><text x="68.7" y="846.6" font-size="10.8" fill="#262626" textLength="47.6" lengthAdjust="spacingAndGlyphs" text-anchor="middle">100% Red</text><rect x="93.9" y="803" width="1.6" height="48.5" fill="#262626"/><rect x="92.2" y="849.3" width="5" height="2.2" fill="#262626"/><rect x="95.8" y="803" width="50.2" height="48.5" rx="3" fill="url(#gBtn)"/><rect x="101.0" y="807.8" width="40.2" height="12.5" rx="2.8" fill="#00ff00"/><text x="106.1" y="834.8" font-size="10.8" fill="#262626" textLength="25.8" lengthAdjust="spacingAndGlyphs">100%</text><text x="106.1" y="846.6" font-size="10.8" fill="#262626" textLength="29.7" lengthAdjust="spacingAndGlyphs">Green</text><rect x="145.9" y="803" width="1.6" height="48.5" fill="#262626"/><rect x="144.2" y="849.3" width="5" height="2.2" fill="#262626"/><rect x="147.8" y="803" width="50.2" height="48.5" rx="3" fill="url(#gBtn)"/><rect x="153.0" y="807.8" width="40.2" height="12.5" rx="2.8" fill="#0000ff"/><text x="160.1" y="834.8" font-size="10.8" fill="#262626" textLength="25.8" lengthAdjust="spacingAndGlyphs">100%</text><text x="160.1" y="846.6" font-size="10.8" fill="#262626" textLength="21.0" lengthAdjust="spacingAndGlyphs">Blue</text><rect x="198.0" y="803" width="1.6" height="48.5" fill="#262626"/><rect x="196.3" y="849.3" width="5" height="2.2" fill="#262626"/><rect x="199.9" y="803" width="50.2" height="48.5" rx="3" fill="url(#gBtn)"/><rect x="205.1" y="807.8" width="40.2" height="12.5" rx="2.8" fill="#00ffff"/><text x="212.2" y="834.8" font-size="10.8" fill="#262626" textLength="25.8" lengthAdjust="spacingAndGlyphs">100%</text><text x="212.2" y="846.6" font-size="10.8" fill="#262626" textLength="24.5" lengthAdjust="spacingAndGlyphs">Cyan</text><rect x="250.0" y="803" width="1.6" height="48.5" fill="#262626"/><rect x="248.3" y="849.3" width="5" height="2.2" fill="#262626"/><rect x="251.9" y="803" width="50.2" height="48.5" rx="3" fill="url(#gBtn)"/><rect x="257.1" y="807.8" width="40.2" height="12.5" rx="2.8" fill="#ff00ff"/><text x="258.1" y="834.8" font-size="10.8" fill="#262626" textLength="25.8" lengthAdjust="spacingAndGlyphs">100%</text><text x="258.1" y="846.6" font-size="10.8" fill="#262626" textLength="38.0" lengthAdjust="spacingAndGlyphs">Magenta</text><rect x="302.1" y="803" width="1.6" height="48.5" fill="#262626"/><rect x="300.4" y="849.3" width="5" height="2.2" fill="#262626"/><rect x="304.0" y="803" width="50.2" height="48.5" rx="3" fill="url(#gBtn)"/><rect x="309.2" y="807.8" width="40.2" height="12.5" rx="2.8" fill="#ffff00"/><text x="314.7" y="834.8" font-size="10.8" fill="#262626" textLength="25.8" lengthAdjust="spacingAndGlyphs">100%</text><text x="314.7" y="846.6" font-size="10.8" fill="#262626" textLength="29.0" lengthAdjust="spacingAndGlyphs">Yellow</text><rect x="354.2" y="803" width="1.6" height="48.5" fill="#262626"/><rect x="352.5" y="849.3" width="5" height="2.2" fill="#262626"/><rect x="356.1" y="803" width="50.2" height="48.5" rx="3" fill="url(#gBtn)"/><rect x="361.3" y="807.8" width="40.2" height="24" rx="2.8" fill="#6b4530"/><text x="381.1" y="846.6" font-size="10.8" fill="#262626" text-anchor="middle" stroke="#262626" stroke-width="0.35">2E</text><rect x="406.2" y="803" width="1.6" height="48.5" fill="#262626"/><rect x="404.5" y="849.3" width="5" height="2.2" fill="#262626"/><rect x="408.1" y="803" width="50.2" height="48.5" rx="3" fill="url(#gBtn)"/><rect x="413.3" y="807.8" width="40.2" height="24" rx="2.8" fill="#c08a6a"/><text x="433.1" y="846.6" font-size="10.8" fill="#262626" text-anchor="middle" stroke="#262626" stroke-width="0.35">2F</text><rect x="458.3" y="803" width="1.6" height="48.5" fill="#262626"/><rect x="456.6" y="849.3" width="5" height="2.2" fill="#262626"/><rect x="460.2" y="803" width="50.2" height="48.5" rx="3" fill="url(#gBtn)"/><rect x="465.4" y="807.8" width="40.2" height="24" rx="2.8" fill="#f5c9a0"/><text x="485.2" y="846.6" font-size="10.8" fill="#262626" text-anchor="middle" stroke="#262626" stroke-width="0.35">2K</text><rect x="510.3" y="803" width="1.6" height="48.5" fill="#262626"/><rect x="508.6" y="849.3" width="5" height="2.2" fill="#262626"/><rect x="512.2" y="803" width="50.2" height="48.5" rx="3" fill="url(#gBtn)"/><rect x="517.4" y="807.8" width="40.2" height="24" rx="2.8" fill="#f5c7ae"/><text x="537.2" y="846.6" font-size="10.8" fill="#262626" text-anchor="middle" stroke="#262626" stroke-width="0.35">5D</text><rect x="562.4" y="803" width="1.6" height="48.5" fill="#262626"/><rect x="560.7" y="849.3" width="5" height="2.2" fill="#262626"/><rect x="564.3" y="803" width="50.2" height="48.5" rx="3" fill="url(#gBtn)"/><rect x="569.5" y="807.8" width="40.2" height="24" rx="2.8" fill="#e8a478"/><text x="589.3" y="846.6" font-size="10.8" fill="#262626" text-anchor="middle" stroke="#262626" stroke-width="0.35">7E</text><rect x="614.5" y="803" width="1.6" height="48.5" fill="#262626"/><rect x="612.8" y="849.3" width="5" height="2.2" fill="#262626"/><rect x="616.4" y="803" width="50.2" height="48.5" rx="3" fill="url(#gBtn)"/><rect x="621.6" y="807.8" width="40.2" height="24" rx="2.8" fill="#c69060"/><text x="641.4" y="846.6" font-size="10.8" fill="#262626" text-anchor="middle" stroke="#262626" stroke-width="0.35">7F</text><rect x="666.5" y="803" width="1.6" height="48.5" fill="#262626"/><rect x="664.8" y="849.3" width="5" height="2.2" fill="#262626"/><rect x="668.4" y="803" width="50.2" height="48.5" rx="3" fill="url(#gBtn)"/><rect x="673.6" y="807.8" width="40.2" height="24" rx="2.8" fill="#8a5a35"/><text x="693.4" y="846.6" font-size="10.8" fill="#262626" text-anchor="middle" stroke="#262626" stroke-width="0.35">7G</text><rect x="718.6" y="803" width="1.6" height="48.5" fill="#262626"/><rect x="716.9" y="849.3" width="5" height="2.2" fill="#262626"/><rect x="720.5" y="803" width="50.2" height="48.5" rx="3" fill="url(#gBtn)"/><rect x="725.7" y="807.8" width="40.2" height="24" rx="2.8" fill="#cc9670"/><text x="745.5" y="846.6" font-size="10.8" fill="#262626" text-anchor="middle" stroke="#262626" stroke-width="0.35">7H</text><rect x="770.6" y="803" width="1.6" height="48.5" fill="#262626"/><rect x="768.9" y="849.3" width="5" height="2.2" fill="#262626"/><rect x="772.5" y="803" width="50.2" height="48.5" rx="3" fill="url(#gBtn)"/><rect x="777.7" y="807.8" width="40.2" height="24" rx="2.8" fill="#9a5a2a"/><text x="797.5" y="846.6" font-size="10.8" fill="#262626" text-anchor="middle" stroke="#262626" stroke-width="0.35">7I</text><rect x="822.7" y="803" width="1.6" height="48.5" fill="#262626"/><rect x="821.0" y="849.3" width="5" height="2.2" fill="#262626"/><rect x="824.6" y="803" width="50.2" height="48.5" rx="3" fill="url(#gBtn)"/><rect x="829.8" y="807.8" width="40.2" height="24" rx="2.8" fill="#d08a62"/><text x="849.6" y="846.6" font-size="10.8" fill="#262626" text-anchor="middle" stroke="#262626" stroke-width="0.35">7J</text><rect x="874.8" y="803" width="1.6" height="48.5" fill="#262626"/><rect x="873.1" y="849.3" width="5" height="2.2" fill="#262626"/><rect x="876.7" y="803" width="50.2" height="48.5" rx="3" fill="url(#gBtn)"/><rect x="881.9" y="807.8" width="40.2" height="24" rx="2.8" fill="#c88a6a"/><text x="901.7" y="846.6" font-size="10.8" fill="#262626" text-anchor="middle" stroke="#262626" stroke-width="0.35">8D</text><rect x="926.8" y="803" width="1.6" height="48.5" fill="#262626"/><rect x="925.1" y="849.3" width="5" height="2.2" fill="#262626"/><rect x="928.7" y="803" width="50.2" height="48.5" rx="3" fill="url(#gBtn)"/><rect x="933.9" y="807.8" width="40.2" height="24" rx="2.8" fill="#f09a78"/><text x="953.7" y="846.6" font-size="10.8" fill="#262626" text-anchor="middle" stroke="#262626" stroke-width="0.35">8E</text><rect x="978.9" y="803" width="1.6" height="48.5" fill="#262626"/><rect x="977.2" y="849.3" width="5" height="2.2" fill="#262626"/><rect x="980.8" y="803" width="50.2" height="48.5" rx="3" fill="url(#gBtn)"/><rect x="986.0" y="807.8" width="40.2" height="24" rx="2.8" fill="#c09070"/><text x="1005.8" y="846.6" font-size="10.8" fill="#262626" text-anchor="middle" stroke="#262626" stroke-width="0.35">8F</text><rect x="1030.9" y="803" width="1.6" height="48.5" fill="#262626"/><rect x="1029.2" y="849.3" width="5" height="2.2" fill="#262626"/><rect x="1032.8" y="803" width="50.2" height="48.5" rx="3" fill="url(#gBtn)"/><rect x="1038.0" y="807.8" width="40.2" height="24" rx="2.8" fill="#c08a68"/><text x="1057.8" y="846.6" font-size="10.8" fill="#262626" text-anchor="middle" stroke="#262626" stroke-width="0.35">8G</text><rect x="1083.0" y="803" width="1.6" height="48.5" fill="#262626"/><rect x="1081.3" y="849.3" width="5" height="2.2" fill="#262626"/><rect x="1084.9" y="803" width="50.2" height="48.5" rx="3" fill="url(#gBtn)"/><rect x="1090.1" y="807.8" width="40.2" height="24" rx="2.8" fill="#c89070"/><text x="1109.9" y="846.6" font-size="10.8" fill="#262626" text-anchor="middle" stroke="#262626" stroke-width="0.35">8H</text><rect x="1135.1" y="803" width="1.6" height="48.5" fill="#262626"/><rect x="1133.4" y="849.3" width="5" height="2.2" fill="#262626"/><rect x="1137.0" y="803" width="50.2" height="48.5" rx="3" fill="url(#gBtn)"/><rect x="1142.2" y="807.8" width="40.2" height="24" rx="2.8" fill="#704a30"/><text x="1162.0" y="846.6" font-size="10.8" fill="#262626" text-anchor="middle" stroke="#262626" stroke-width="0.35">8I</text><rect x="1187.1" y="803" width="1.6" height="48.5" fill="#262626"/><rect x="1185.4" y="849.3" width="5" height="2.2" fill="#262626"/><rect x="1189.0" y="803" width="49.5" height="48.5" rx="3" fill="#1c1c1c"/><rect x="1194.2" y="807.8" width="40.2" height="24" rx="2.8" fill="#d09068"/><text x="1214.0" y="846.6" font-size="10.8" fill="#ffffff" text-anchor="middle" font-weight="bold">8J</text><rect x="0" y="851.5" width="1238" height="10.5" fill="#686868"/><rect x="0" y="852" width="8" height="10" fill="#a0a0a0"/><path d="M1.5,857 L6.5,853.5 L6.5,860.5 Z" fill="#333"/><rect x="608" y="852.5" width="617" height="10" rx="5" fill="#4c4c4c"/><rect x="1227" y="852" width="11" height="10" fill="#8a8a8a"/><path d="M1235.5,857 L1230.5,853.5 L1230.5,860.5 Z" fill="#333"/><rect x="1238.5" y="801" width="320" height="61" fill="#2a2a2a"/><rect x="1239" y="803.1" width="48.1" height="17.9" rx="3" fill="url(#gCtl)"/><circle cx="1263.6" cy="811.7" r="7.4" fill="url(#gCirc)"/><path d="M1259.4,813.8 L1263.6,809.1 L1267.8,813.8 Z" fill="#333"/><rect x="1239" y="822" width="48.1" height="40" fill="url(#gCtl)"/><rect x="1248.5" y="828.4" width="28.8" height="28.6" rx="4" fill="#b4b4b4" stroke="#262626" stroke-width="2.2"/><rect x="1249.6" y="843.1" width="26.6" height="12.8" rx="2" fill="#9a9a9a"/><rect x="1256.2" y="836.1" width="13.5" height="13.5" fill="#262626"/><rect x="1256.2" y="843.1" width="13.5" height="6.5" fill="#000"/><rect x="1288.2" y="803.1" width="45.3" height="29.7" fill="url(#gCtl)"/><circle cx="1311.0" cy="818" r="10" fill="url(#gCirc)"/><rect x="1334.5" y="803.1" width="43.8" height="29.7" fill="url(#gCtl)"/><circle cx="1356.6" cy="818" r="10" fill="url(#gCirc)"/><rect x="1379.3" y="803.1" width="43.9" height="29.7" fill="url(#gCtl)"/><circle cx="1401.5" cy="818" r="10" fill="url(#gCirc)"/><rect x="1424.2" y="803.1" width="44.1" height="29.7" fill="url(#gCtl)"/><circle cx="1446.5" cy="818" r="10" fill="url(#gCirc)"/><rect x="1469.3" y="803.1" width="44.6" height="29.7" fill="#3c3c3c"/><circle cx="1491.8" cy="818" r="10" fill="url(#gCircD)"/><rect x="1514.9" y="803.1" width="44.1" height="29.7" fill="url(#gCtl)"/><circle cx="1537.2" cy="818" r="10" fill="url(#gCirc)"/><rect x="1307.1" y="814" width="7.9" height="7.7" fill="#2a2a2a"/><path d="M1354,813.3 L1362.4,818.5 L1354,823.6 Z" fill="#2a2a2a"/><path d="M1397.2,813.5 h-2 v9 h2 M1405.8,813.5 h2 v9 h-2" stroke="#2a2a2a" stroke-width="1.6" fill="none"/><rect x="1398.6" y="817.6" width="1.6" height="1.6" fill="#2a2a2a"/><rect x="1402.4" y="817.6" width="1.6" height="1.6" fill="#2a2a2a"/><path d="M1446.5,818 C1444,814.5 1440.5,814.5 1440.5,818 C1440.5,821.5 1444,821.5 1446.5,818 C1449,814.5 1452.5,814.5 1452.5,818 C1452.5,821.5 1449,821.5 1446.5,818 Z" stroke="#2a2a2a" stroke-width="1.8" fill="none"/><path d="M1486.5,816 A5.5,5.5 0 0 1 1496.5,815.5 M1497,820 A5.5,5.5 0 0 1 1487,820.5" stroke="#1e1e1e" stroke-width="2" fill="none"/><path d="M1494.5,813 L1498.5,816.5 L1494,817.5 Z M1489,823 L1485,819.5 L1489.5,818.5 Z" fill="#1e1e1e"/><rect x="1288.2" y="833.8" width="135.2" height="28.2" rx="2" fill="url(#gCtl)"/><rect x="1425.3" y="833.8" width="134" height="28.2" rx="2" fill="url(#gCtl)"/><circle cx="1319" cy="849.1" r="10" fill="url(#gCirc)"/><path d="M1318.5,844.5 L1314.5,849 L1318.5,853.5 M1322.5,844.5 L1318.5,849 L1322.5,853.5" stroke="#2a2a2a" stroke-width="1.5" fill="none"/><circle cx="1532.3" cy="849.1" r="10" fill="url(#gCirc)"/><path d="M1528.8,844.5 L1532.8,849 L1528.8,853.5 M1532.8,844.5 L1536.8,849 L1532.8,853.5" stroke="#2a2a2a" stroke-width="1.5" fill="none"/><text x="1346.1" y="856.5" font-size="21.0" fill="#2a2a2a" textLength="49.4" lengthAdjust="spacingAndGlyphs">Back</text><text x="1452.4" y="856.5" font-size="21.0" fill="#2a2a2a" textLength="51.6" lengthAdjust="spacingAndGlyphs">Next</text>
</svg>
</body></html>
